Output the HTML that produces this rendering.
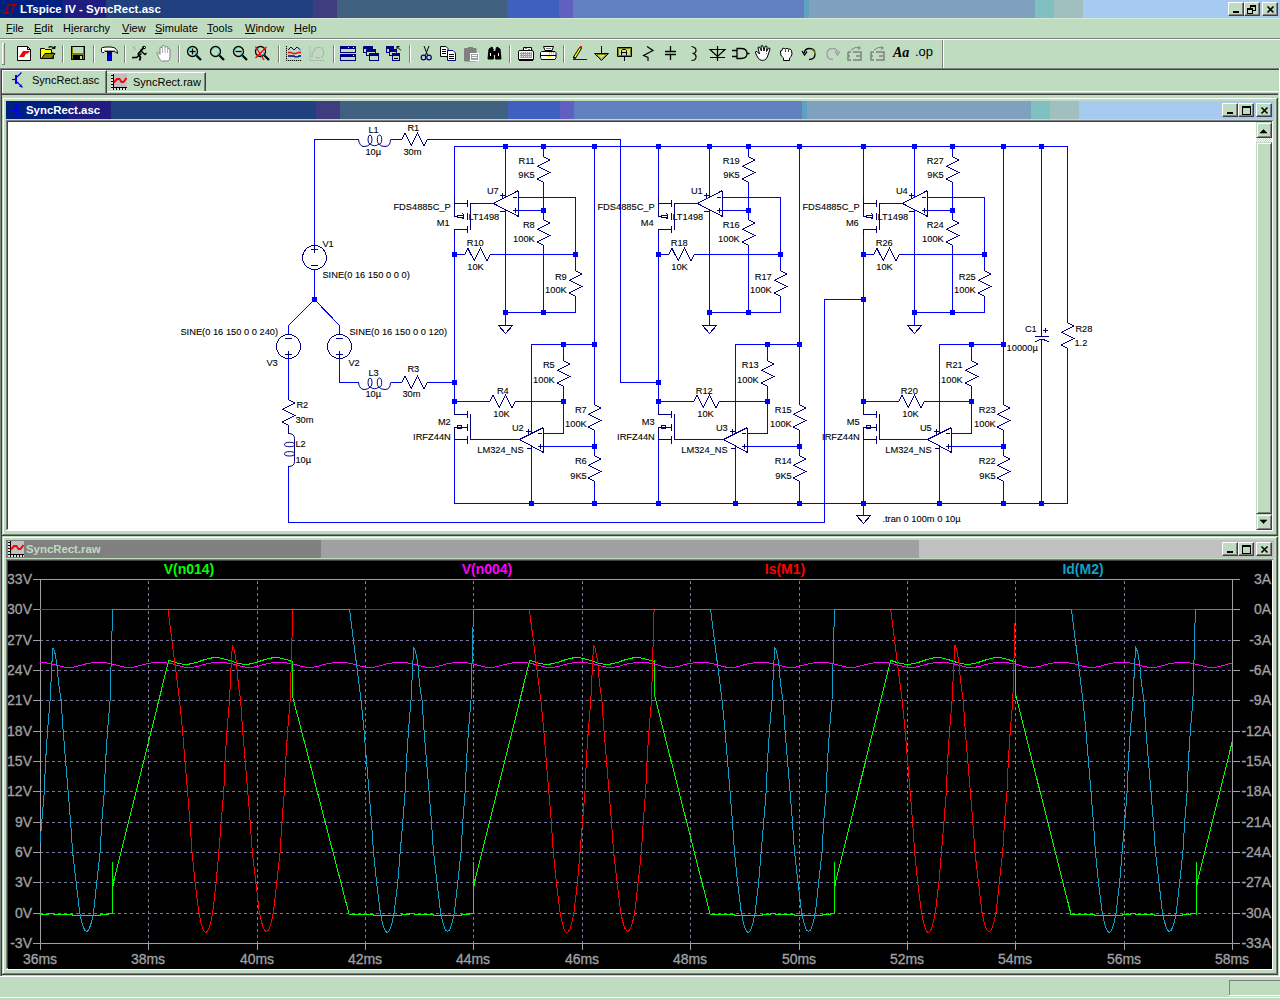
<!DOCTYPE html><html><head><meta charset="utf-8"><style>
*{margin:0;padding:0;box-sizing:border-box}
html,body{width:1280px;height:1000px;overflow:hidden;background:#c0dcc0;font-family:"Liberation Sans",sans-serif;position:relative}
.a{position:absolute}
.seg{position:absolute;top:0;height:100%}
.cb{position:absolute;width:16px;height:14px;background:#c0dcc0;border-top:1px solid #fff;border-left:1px solid #fff;border-right:1px solid #404040;border-bottom:1px solid #404040;box-shadow:inset -1px -1px 0 #808080}
.menu{position:absolute;top:21px;font-size:11px;line-height:14px;color:#000;white-space:nowrap}
svg{position:absolute;overflow:visible}
.ttl{position:absolute;font-weight:bold;white-space:nowrap}
</style></head><body>
<div class="a" style="left:0;top:0;width:1280px;height:18px;overflow:hidden"><div class="seg" style="left:0px;width:63px;background:#002080"></div><div class="seg" style="left:63px;width:43px;background:#201c80"></div><div class="seg" style="left:106px;width:207px;background:#204080"></div><div class="seg" style="left:313px;width:24px;background:#403c80"></div><div class="seg" style="left:337px;width:170px;background:#406080"></div><div class="seg" style="left:507px;width:52px;background:#4060c0"></div><div class="seg" style="left:559px;width:14px;background:#6060c0"></div><div class="seg" style="left:573px;width:231px;background:#6080c0"></div><div class="seg" style="left:804px;width:5px;background:#60a0c0"></div><div class="seg" style="left:809px;width:226px;background:#80a0c0"></div><div class="seg" style="left:1035px;width:19px;background:#80c0c0"></div><div class="seg" style="left:1054px;width:29px;background:#a0c0c0"></div><div class="seg" style="left:1083px;width:197px;background:#a6caf0"></div></div>
<svg width="18" height="18" style="left:0;top:0"><path d="M7.5 4 H9 L6.8 12 H9.5 L8.8 14 H2 L3 12.5 H5 Z M10 4 H17 L16.3 5.5 H15.2 L12 13.5 H10.8 L13.8 5.5 H10.2 Z" fill="#a00000"/></svg>
<div class="ttl" style="left:20px;top:2px;font-size:11.5px;line-height:14px;color:#fff">LTspice IV - SyncRect.asc</div>
<div class="cb" style="left:1228px;top:2px"><div class="a" style="left:4px;top:8px;width:6px;height:2px;background:#000"></div></div><div class="cb" style="left:1244px;top:2px"><div class="a" style="left:5px;top:2px;width:6px;height:6px;border:1px solid #000;border-top-width:2px"></div><div class="a" style="left:2px;top:5px;width:6px;height:6px;border:1px solid #000;border-top-width:2px;background:#c0dcc0"></div></div><div class="cb" style="left:1262px;top:2px"><svg width="16" height="14" style="left:0;top:0"><path d="M4.5 3.5 L10.5 9.5 M10.5 3.5 L4.5 9.5" stroke="#000" stroke-width="1.6"/></svg></div>
<div class="a" style="left:0px;top:18px;width:1280px;height:1px;background:#d4ead4"></div>
<div class="menu" style="left:6px"><u>F</u>ile</div>
<div class="menu" style="left:34px"><u>E</u>dit</div>
<div class="menu" style="left:63px">H<u>i</u>erarchy</div>
<div class="menu" style="left:122px"><u>V</u>iew</div>
<div class="menu" style="left:155px"><u>S</u>imulate</div>
<div class="menu" style="left:207px"><u>T</u>ools</div>
<div class="menu" style="left:245px"><u>W</u>indow</div>
<div class="menu" style="left:294px"><u>H</u>elp</div>
<div class="a" style="left:0px;top:38px;width:1280px;height:1px;background:#808080"></div><div class="a" style="left:0px;top:39px;width:1280px;height:1px;background:#fff"></div>
<svg width="1280" height="70" style="left:0;top:0">
<rect x="2" y="43" width="1" height="22" fill="#fff"/>
<rect x="2" y="43" width="2" height="1" fill="#fff"/>
<rect x="4" y="43" width="1" height="22" fill="#808080"/>
<rect x="2" y="64" width="3" height="1" fill="#808080"/>
<path d="M17.5 46.5 H27.5 L30.5 49.5 V60.5 H17.5 Z" stroke="#000" fill="#fff" stroke-width="1" />
<path d="M27.5 46.5 V49.5 H30.5" stroke="#000" fill="none" stroke-width="1" />
<path d="M19 57 L23 51 L30 51 L28 53.5 L26 53.5 L24 57 Z M22 54 h3" stroke="none" fill="#ff0000" stroke-width="1" />
<path d="M40.5 48.5 H44.5 L45.5 49.5 H51.5 V53 H53.5 V58.5 H40.5 Z" stroke="#000" fill="#ffff00" stroke-width="1" />
<path d="M41.5 58.5 L45 53.5 H55 L51.5 58.5 Z" stroke="#000" fill="#808000" stroke-width="1" />
<path d="M48.5 47.5 Q51 45.5 54 48" stroke="#000" fill="none" stroke-width="1.2" />
<path d="M52.5 48.5 h2.5 v-2.5 z" stroke="#000" fill="#000" stroke-width="1" />
<rect x="62" y="45" width="1" height="18" fill="#808080"/>
<rect x="63" y="45" width="1" height="18" fill="#fff"/>
<rect x="71" y="46" width="14" height="14" fill="#000"/>
<rect x="72" y="47" width="12" height="12" fill="#808000"/>
<rect x="73" y="47" width="10" height="6" fill="#c0dcc0"/>
<rect x="73" y="55" width="10" height="4" fill="#000"/>
<rect x="80" y="56" width="2" height="3" fill="#c0dcc0"/>
<rect x="93" y="45" width="1" height="18" fill="#808080"/>
<rect x="94" y="45" width="1" height="18" fill="#fff"/>
<path d="M101.5 48.5 Q101.5 47.5 102.5 47.5 H104 L105 47 H111 Q115.5 47 117 50.5 L117.5 53.5 L115.5 52 Q114 51.5 112 51.5 H105 L104 52.5 H102.5 Q101.5 52.5 101.5 51.5 Z" stroke="#000" fill="#fff" stroke-width="1" />
<rect x="104" y="50" width="11" height="1" fill="#a0a0a4"/>
<rect x="107" y="52" width="5" height="4" fill="#000080"/>
<rect x="107" y="56" width="5" height="5" fill="#0000ff"/>
<path d="M107.5 52 V60.5 H111.5 V52" stroke="#000080" fill="none" stroke-width="1" />
<rect x="124" y="45" width="1" height="18" fill="#808080"/>
<rect x="125" y="45" width="1" height="18" fill="#fff"/>
<path d="M141.5 53.5 L136.5 57.5 H133 V58.5" stroke="#000" fill="none" stroke-width="1.6" />
<path d="M143.5 48 L139 53 Q137.5 54.5 139.5 56 L140.5 57.5 L139.5 60.5" stroke="#000" fill="none" stroke-width="1.8" />
<path d="M141 51 L145 54.5 L146.5 53" stroke="#000" fill="none" stroke-width="1.3" />
<path d="M140.5 50.5 L142 49" stroke="#000" fill="none" stroke-width="1.3" />
<circle cx="144" cy="47.5" r="1.8" fill="#000"/><rect x="144" y="47" width="1" height="1" fill="#fff"/>
<path d="M132.5 48 L135.5 46.5 M133 50 L136 48.5" stroke="#a0a0a4" fill="none" stroke-width="0.9" />
<path d="M157 53.5 Q156 52.5 157.5 52 L160 54.5 V48 Q160 47 161 47 Q162 47 162 48 V46.5 Q162 45.5 163.5 45.5 Q165 45.5 165 46.5 V47.5 Q165.5 46.5 166.5 46.5 Q168 46.5 168 48 V49 Q168.5 48 169 48.5 Q170 49 170 50 V57 Q170 60 168 61 H161.5 Q160 60 159 58 Z" stroke="#808080" fill="#fff" stroke-width="1" />
<path d="M162.5 48 V53 M165 47.5 V53 M167.5 48.5 V53" stroke="#a0a0a4" fill="none" stroke-width="0.8" />
<rect x="178" y="45" width="1" height="18" fill="#808080"/>
<rect x="179" y="45" width="1" height="18" fill="#fff"/>
<path d="M196.5 55.5 L201.0 60" stroke="#000" fill="none" stroke-width="2.2" />
<circle cx="192.5" cy="51.5" r="5" fill="none" stroke="#000" stroke-width="1.3"/>
<path d="M189.3 50 A3.6 3.6 0 0 1 191.5 47.8" stroke="#00e0ff" fill="none" stroke-width="1" />
<path d="M195.8 52 A3.6 3.6 0 0 1 194.0 54.8" stroke="#00e0ff" fill="none" stroke-width="1" />
<path d="M189.5 51.5 H195.5" stroke="#000" fill="none" stroke-width="1.3" />
<path d="M192.5 48.5 V54.5" stroke="#000" fill="none" stroke-width="1.3" />
<path d="M219.5 55.5 L224.0 60" stroke="#000" fill="none" stroke-width="2.2" />
<circle cx="215.5" cy="51.5" r="5" fill="none" stroke="#000" stroke-width="1.3"/>
<path d="M212.3 50 A3.6 3.6 0 0 1 214.5 47.8" stroke="#00e0ff" fill="none" stroke-width="1" />
<path d="M218.8 52 A3.6 3.6 0 0 1 217.0 54.8" stroke="#00e0ff" fill="none" stroke-width="1" />
<path d="M242.5 55.5 L247.0 60" stroke="#000" fill="none" stroke-width="2.2" />
<circle cx="238.5" cy="51.5" r="5" fill="none" stroke="#000" stroke-width="1.3"/>
<path d="M235.3 50 A3.6 3.6 0 0 1 237.5 47.8" stroke="#00e0ff" fill="none" stroke-width="1" />
<path d="M241.8 52 A3.6 3.6 0 0 1 240.0 54.8" stroke="#00e0ff" fill="none" stroke-width="1" />
<path d="M235.5 51.5 H241.5" stroke="#000" fill="none" stroke-width="1.3" />
<path d="M264.5 55.5 L269.0 60" stroke="#000" fill="none" stroke-width="2.2" />
<circle cx="260.5" cy="51.5" r="5" fill="none" stroke="#000" stroke-width="1.3"/>
<path d="M257.3 50 A3.6 3.6 0 0 1 259.5 47.8" stroke="#00e0ff" fill="none" stroke-width="1" />
<path d="M263.8 52 A3.6 3.6 0 0 1 262.0 54.8" stroke="#00e0ff" fill="none" stroke-width="1" />
<path d="M255.5 46.5 L264 60 M266.5 47 L255.5 58" stroke="#ff0000" fill="none" stroke-width="1.4" />
<rect x="278" y="45" width="1" height="18" fill="#808080"/>
<rect x="279" y="45" width="1" height="18" fill="#fff"/>
<path d="M286.5 46 V60.5 H302" stroke="#000" fill="none" stroke-width="1" stroke-dasharray="1.2 0.8"/>
<path d="M288 50 L291 47 L294 50 L297 47 L300.5 50" stroke="#000080" fill="none" stroke-width="1" />
<path d="M288 52.5 H291 L293 53.5 H296 L298 52.5 H301" stroke="#ff0000" fill="none" stroke-width="1.3" />
<path d="M288 56 H294 L295 56.8 H298 L299 56 H301" stroke="#000080" fill="none" stroke-width="1.3" />
<path d="M310 46.5 V60.5 H325" stroke="#a0a0a4" fill="none" stroke-width="1" stroke-dasharray="1.2 1"/>
<path d="M312 57 Q312 51 317 47.5 Q322 47 322.5 49 Q325 53 322 57 Q319 59 316 57" stroke="#a0a0a4" fill="none" stroke-width="1.2" stroke-dasharray="1.5 1"/>
<rect x="333" y="45" width="1" height="18" fill="#808080"/>
<rect x="334" y="45" width="1" height="18" fill="#fff"/>
<rect x="340" y="46" width="16" height="7" fill="#000080"/>
<rect x="341" y="49" width="14" height="3" fill="#c0dcc0"/>
<rect x="340" y="54" width="16" height="7" fill="#000080"/>
<rect x="341" y="57" width="14" height="3" fill="#c0dcc0"/>
<rect x="348" y="47" width="1" height="1" fill="#fff"/>
<rect x="353" y="47" width="1" height="1" fill="#fff"/>
<rect x="353" y="55" width="1" height="1" fill="#fff"/>
<rect x="363" y="46" width="10" height="7" fill="#000080"/>
<rect x="364" y="49" width="8" height="3" fill="#c0dcc0"/>
<rect x="366" y="49" width="10" height="7" fill="#000080"/>
<rect x="367" y="52" width="8" height="3" fill="#c0dcc0"/>
<rect x="369" y="53" width="10" height="8" fill="#000080"/>
<rect x="370" y="56" width="8" height="4" fill="#c0dcc0"/>
<rect x="363" y="46" width="1" height="1" fill="#ff0000"/>
<rect x="366" y="49" width="1" height="1" fill="#ff0000"/>
<rect x="386" y="46" width="8" height="7" fill="#000080"/>
<rect x="387" y="49" width="6" height="3" fill="#c0dcc0"/>
<rect x="389" y="49" width="8" height="7" fill="#000080"/>
<rect x="390" y="52" width="6" height="3" fill="#c0dcc0"/>
<rect x="392" y="53" width="8" height="8" fill="#000080"/>
<rect x="393" y="56" width="6" height="4" fill="#c0dcc0"/>
<rect x="394" y="58" width="4" height="1" fill="#000"/>
<path d="M397 46.5 L401 50.5 M397 46.5 h2.5 M397 46.5 v2.5" stroke="#000" fill="none" stroke-width="1" />
<rect x="409" y="45" width="1" height="18" fill="#808080"/>
<rect x="410" y="45" width="1" height="18" fill="#fff"/>
<path d="M424 46 L427.5 55 M429 46 L425.5 55" stroke="#000" fill="none" stroke-width="1" />
<circle cx="423.5" cy="57.5" r="2.3" fill="none" stroke="#000080" stroke-width="1.2"/><circle cx="429" cy="57.5" r="2.3" fill="none" stroke="#000080" stroke-width="1.2"/>
<path d="M440.5 46.5 H446 L448 48.5 V56.5 H440.5 Z" stroke="#000" fill="#fff" stroke-width="1" />
<rect x="442" y="49" width="4" height="1" fill="#000"/>
<rect x="442" y="51" width="4" height="1" fill="#000"/>
<rect x="442" y="53" width="4" height="1" fill="#000"/>
<path d="M447.5 50.5 H453 L455.5 53 V60.5 H447.5 Z" stroke="#000080" fill="#fff" stroke-width="1" />
<rect x="449" y="54" width="5" height="1" fill="#000"/>
<rect x="449" y="56" width="5" height="1" fill="#000"/>
<rect x="449" y="58" width="5" height="1" fill="#000"/>
<path d="M464.5 48.5 H476 V61 H464.5 Z" stroke="#808080" fill="#808080" stroke-width="1" />
<rect x="468" y="47" width="5" height="2" fill="#808080"/>
<rect x="470" y="53" width="9" height="8" fill="#fff"/>
<rect x="471" y="54" width="7" height="6" fill="#a0a0a4"/>
<rect x="472" y="55" width="5" height="1" fill="#fff"/>
<rect x="472" y="57" width="5" height="1" fill="#fff"/>
<path d="M488 59 L489 49 L492 47 L493 49 L493.5 59 Z M495.5 59 L496 49 L497 47 L500 49 L501 59 Z" stroke="#000" fill="#000" stroke-width="1" />
<rect x="492" y="51" width="5" height="4" fill="#000"/>
<rect x="490" y="53" width="1" height="3" fill="#fff"/>
<rect x="498" y="53" width="1" height="3" fill="#fff"/>
<rect x="509" y="45" width="1" height="18" fill="#808080"/>
<rect x="510" y="45" width="1" height="18" fill="#fff"/>
<path d="M523.5 47.5 H531.5 V50.5 H523.5 Z" stroke="#000" fill="#fff" stroke-width="1" />
<rect x="525" y="48" width="2" height="1" fill="#808080"/>
<rect x="528" y="49" width="2" height="1" fill="#808080"/>
<path d="M518.5 51.5 Q518.5 50.5 520 50.5 H532 Q533.5 50.5 533.5 52 V59.5 H518.5 Z" stroke="#000" fill="#fff" stroke-width="1" />
<rect x="520" y="52" width="12" height="6" fill="#a0a0a4"/>
<path d="M520 52.5 h12 M520 54.5 h12 M520 56.5 h12" stroke="#fff" fill="none" stroke-width="0.7" stroke-dasharray="1 1"/>
<rect x="519" y="60" width="14" height="1" fill="#000"/>
<path d="M543.5 46.5 H553.5 L552 50.5 H545 Z" stroke="#000" fill="#fff" stroke-width="1" />
<rect x="546" y="48" width="5" height="1" fill="#808080"/>
<path d="M541.5 51.5 Q540 52 540.5 55 Q540 58 541.5 59.5 H555 Q556.5 58 556 55 Q556.5 52 555 51.5 Z" stroke="#000" fill="#fff" stroke-width="1" />
<rect x="541" y="55" width="15" height="1" fill="#000"/>
<rect x="547" y="56" width="4" height="1" fill="#ffff00"/>
<path d="M549 52.5 h5 M549 54 h5" stroke="#808080" fill="none" stroke-width="0.7" stroke-dasharray="1 1"/>
<rect x="563" y="45" width="1" height="18" fill="#808080"/>
<rect x="564" y="45" width="1" height="18" fill="#fff"/>
<path d="M573.5 57 L579.5 47.5 L581.5 48.5 L575.5 58 Z" stroke="#000" fill="#ffff00" stroke-width="1" />
<path d="M574 58.5 L575.5 58 L573.5 57 Z" stroke="#000" fill="#000" stroke-width="1" />
<rect x="580" y="46" width="2" height="2" fill="#ff0000"/>
<rect x="573" y="59" width="14" height="1" fill="#0000ff"/>
<path d="M601.5 46 V53" stroke="#000" fill="none" stroke-width="1" />
<path d="M594.5 53.5 H608.5 L601.5 60.5 Z" stroke="#000" fill="#c0dcc0" stroke-width="1" />
<path d="M596.5 54.5 H606.5 L601.5 59 Z" stroke="#808000" fill="none" stroke-width="1" />
<path d="M617.5 47.5 H631.5 V56.5 H617.5 Z" stroke="#000" fill="#c0dcc0" stroke-width="1" />
<path d="M618.5 48.5 H630.5 V55.5 H618.5 Z" stroke="#808000" fill="none" stroke-width="1" />
<path d="M621.5 55.5 V50.5 L622.5 49.5 H625.5 L626.5 50.5 V55.5 M622 52.5 h4" stroke="#000" fill="none" stroke-width="1" />
<rect x="624" y="57" width="1" height="4" fill="#000"/>
<path d="M647 46.5 L653 50.5 L643.5 55.5 L648 57.5 V61" stroke="#000" fill="none" stroke-width="1.2" />
<path d="M670.5 46 V51.5 M670.5 54.5 V60 M665 51.5 H676 M665 54.5 H676" stroke="#000" fill="none" stroke-width="1.3" />
<path d="M691.5 46.5 Q696.5 47.5 696 51 Q695.5 53.5 692.5 53.5 Q696.5 54 696 57.5 Q695.5 60.5 691.5 60.5" stroke="#000" fill="none" stroke-width="1.2" />
<path d="M717.5 46 V61 M710 49.5 H725 L717.5 56.5 Z M710 57.5 H725" stroke="#000" fill="none" stroke-width="1.2" />
<path d="M737 48.5 H741 Q747 48.5 747 53.5 Q747 58.5 741 58.5 H737 Z" stroke="#000" fill="#c0dcc0" stroke-width="1.3" />
<path d="M732 50.5 H737 M732 56.5 H737 M747 53.5 H749.5" stroke="#000" fill="none" stroke-width="1.3" />
<path d="M755.5 53 Q755 51 757 51.5 L759.5 54 L758 48 Q758 46.5 759.5 47 L761.5 51 L761 46 Q762 45 763 46 L764 51 L765 46.5 Q766 45.5 767 46.5 L766.5 51.5 L768.5 48 Q770 47.5 770 49 L768 55 Q767 60 762.5 60.5 Q759 60.5 757.5 57 Z" stroke="#000" fill="#fff" stroke-width="1" />
<rect x="766" y="53" width="1" height="1" fill="#00a0c0"/>
<path d="M780.5 53 Q780 50 782 50.5 L782.5 48.5 Q784 47.5 785.5 49 Q787 47.5 788.5 49 Q790.5 48.5 791.5 50.5 L792 54 Q791.5 57 789.5 58 V60.5 H783.5 V58 Q780.5 56.5 780.5 53 Z" stroke="#000" fill="#fff" stroke-width="1" />
<path d="M785.5 49.5 V52 M788.5 49.5 V52" stroke="#000" fill="none" stroke-width="0.8" />
<path d="M804 53 Q805 48.5 809.5 48.5 Q815 48.5 815 54 Q815 59.5 809 59.5" stroke="#000" fill="none" stroke-width="1.3" />
<path d="M802 51 L804.5 55 L807 51.5" stroke="#000" fill="none" stroke-width="1.3" />
<path d="M812 49.5 Q815 51 815 54" stroke="#808000" fill="none" stroke-width="1.3" />
<path d="M838 53 Q837 48.5 832.5 48.5 Q827 48.5 827 54 Q827 59.5 833 59.5" stroke="#a0a0a4" fill="none" stroke-width="1.3" />
<path d="M840 51 L837.5 55 L835 51.5" stroke="#a0a0a4" fill="none" stroke-width="1.3" />
<path d="M848 52 H851 M848 52 V60 H851 M848 56 H850" stroke="#808080" fill="none" stroke-width="1.5" />
<path d="M853 52 H861 V60 H853 M856 56 H860" stroke="#808080" fill="none" stroke-width="1.5" />
<path d="M851 50 Q855 46 860 48 M858 46.5 L860.5 48 L858 49.5" stroke="#808080" fill="none" stroke-width="1" />
<path d="M871 52 H874 M871 52 V60 H874 M871 56 H873" stroke="#808080" fill="none" stroke-width="1.5" />
<path d="M876 52 H884 V60 H876 M879 56 H883" stroke="#808080" fill="none" stroke-width="1.5" />
<path d="M874 50 Q878 46 883 48 M881 46.5 L883.5 48 L881 49.5" stroke="#808080" fill="none" stroke-width="1" />
</svg>
<div class="a" style="left:893px;top:45px;font-family:'Liberation Serif';font-style:italic;font-weight:bold;font-size:14px;line-height:16px;color:#000">Aa</div>
<div class="a" style="left:915px;top:44px;font-family:'Liberation Sans';font-size:13px;line-height:16px;color:#000">.op</div>
<svg width="1280" height="70" style="left:0;top:0"><rect x="942" y="40" width="1" height="28" fill="#808080"/><rect x="943" y="40" width="1" height="28" fill="#fff"/></svg>
<div class="a" style="left:0px;top:68px;width:1280px;height:1px;background:#808080"></div><div class="a" style="left:1px;top:69px;width:1279px;height:1px;background:#404040"></div><div class="a" style="left:0px;top:68px;width:1px;height:909px;background:#808080"></div><div class="a" style="left:1px;top:69px;width:1px;height:907px;background:#404040"></div>
<div class="a" style="left:1279px;top:68px;width:1px;height:909px;background:#fff"></div>
<div class="a" style="left:107px;top:91px;width:1171px;height:1px;background:#fff"></div><div class="a" style="left:2px;top:93px;width:1276px;height:1px;background:#808080"></div><div class="a" style="left:2px;top:94px;width:1276px;height:1px;background:#404040"></div>
<div class="a" style="left:2px;top:70px;width:105px;height:23px;background:#c0dcc0;border-top:1px solid #fff;border-left:1px solid #fff;border-right:1px solid #404040;box-shadow:inset -1px 0 0 #808080"></div>
<svg width="30" height="24" style="left:0;top:68px"><path d="M12 11.5 H15.5" stroke="#0000ff" stroke-width="1.2"/><rect x="15" y="7" width="2" height="9" fill="#0000ff"/><path d="M17 9 L21.5 4.5 M17 14 L22.5 19.5" stroke="#0000ff" stroke-width="1.2"/><path d="M19 18.5 L21.5 16 L21.5 19 Z" fill="#0000ff"/></svg>
<div class="a" style="left:32px;top:74px;font-size:11px;line-height:13px;color:#000;white-space:nowrap">SyncRect.asc</div>
<div class="a" style="left:107px;top:72px;width:99px;height:19px;background:#c0dcc0;border-top:1px solid #fff;border-right:1px solid #404040;box-shadow:inset -1px 0 0 #808080"></div>
<svg width="18" height="17" style="left:111px;top:74px" shape-rendering="crispEdges"><rect x="2" y="0" width="14" height="13" fill="#c0c0c0"/><rect x="0" y="0" width="2" height="16" fill="#e0e0e0"/><rect x="0" y="14" width="16" height="2" fill="#e0e0e0"/><rect x="2" y="0" width="1" height="16" fill="#000"/><rect x="0" y="13" width="16" height="1" fill="#000"/><rect x="0" y="1" width="2" height="1" fill="#000"/><rect x="0" y="4" width="2" height="1" fill="#000"/><rect x="0" y="7" width="2" height="1" fill="#000"/><rect x="0" y="10" width="2" height="1" fill="#000"/><rect x="2" y="14" width="1" height="2" fill="#000"/><rect x="5" y="14" width="1" height="2" fill="#000"/><rect x="8" y="14" width="1" height="2" fill="#000"/><rect x="11" y="14" width="1" height="2" fill="#000"/><rect x="14" y="14" width="1" height="2" fill="#000"/></svg><svg width="18" height="17" style="left:111px;top:74px"><path d="M3 8.5 L6 5 H8.5 L10.5 8 H12.5 L15.5 4" stroke="#ff0000" stroke-width="2" fill="none" stroke-linejoin="round"/></svg>
<div class="a" style="left:133px;top:76px;font-size:11px;line-height:13px;color:#000;white-space:nowrap">SyncRect.raw</div>
<div class="a" style="left:3px;top:98px;width:1273px;height:1px;background:#fff"></div><div class="a" style="left:3px;top:98px;width:1px;height:436px;background:#fff"></div><div class="a" style="left:1276px;top:99px;width:1px;height:436px;background:#808080"></div><div class="a" style="left:1277px;top:98px;width:1px;height:438px;background:#404040"></div><div class="a" style="left:3px;top:534px;width:1274px;height:1px;background:#808080"></div><div class="a" style="left:2px;top:535px;width:1276px;height:1px;background:#404040"></div><div class="a" style="left:6px;top:101px;width:1268px;height:18px;overflow:hidden"><div class="seg" style="left:0px;width:62px;background:#002080"></div><div class="seg" style="left:62px;width:43px;background:#201c80"></div><div class="seg" style="left:105px;width:205px;background:#204080"></div><div class="seg" style="left:310px;width:24px;background:#403c80"></div><div class="seg" style="left:334px;width:168px;background:#406080"></div><div class="seg" style="left:502px;width:52px;background:#4060c0"></div><div class="seg" style="left:554px;width:14px;background:#6060c0"></div><div class="seg" style="left:568px;width:228px;background:#6080c0"></div><div class="seg" style="left:796px;width:5px;background:#60a0c0"></div><div class="seg" style="left:801px;width:224px;background:#80a0c0"></div><div class="seg" style="left:1025px;width:19px;background:#80c0c0"></div><div class="seg" style="left:1044px;width:29px;background:#a0c0c0"></div><div class="seg" style="left:1073px;width:195px;background:#a6caf0"></div></div><svg width="20" height="18" style="left:7px;top:101px"><path d="M4.5 9.5 H8.5 M8.5 4 V14 M8.5 7 L13 2.5 M8.5 11 L14 16" stroke="#0000ff" stroke-width="1.2" fill="none"/><path d="M8 5h2v8h-2z M11 13.5 l2.5 -1 l0 2.5z" fill="#0000ff"/></svg><div class="ttl" style="left:26px;top:103px;font-size:11.4px;line-height:14px;color:#fff">SyncRect.asc</div><div class="cb" style="left:1222px;top:103px"><div class="a" style="left:4px;top:8px;width:6px;height:2px;background:#000"></div></div><div class="cb" style="left:1238px;top:103px"><div class="a" style="left:3px;top:2px;width:9px;height:9px;border:1px solid #000;border-top-width:2px"></div></div><div class="cb" style="left:1256px;top:103px"><svg width="16" height="14" style="left:0;top:0"><path d="M4.5 3.5 L10.5 9.5 M10.5 3.5 L4.5 9.5" stroke="#000" stroke-width="1.6"/></svg></div><div class="a" style="left:6px;top:120px;width:1267px;height:1px;background:#808080"></div><div class="a" style="left:6px;top:120px;width:1px;height:410px;background:#808080"></div><div class="a" style="left:7px;top:121px;width:1265px;height:1px;background:#404040"></div><div class="a" style="left:7px;top:121px;width:1px;height:408px;background:#404040"></div><div class="a" style="left:1272px;top:121px;width:1px;height:410px;background:#fff"></div><div class="a" style="left:6px;top:530px;width:1267px;height:1px;background:#fff"></div>
<div class="a" style="left:3px;top:537px;width:1273px;height:1px;background:#fff"></div><div class="a" style="left:3px;top:537px;width:1px;height:436px;background:#fff"></div><div class="a" style="left:1276px;top:538px;width:1px;height:436px;background:#808080"></div><div class="a" style="left:1277px;top:537px;width:1px;height:438px;background:#404040"></div><div class="a" style="left:3px;top:973px;width:1274px;height:1px;background:#808080"></div><div class="a" style="left:2px;top:974px;width:1276px;height:1px;background:#404040"></div><div class="a" style="left:6px;top:540px;width:1268px;height:18px;overflow:hidden"><div class="seg" style="left:0;width:315px;background:#808080"></div><div class="seg" style="left:315px;width:598px;background:#a0a0a4"></div><div class="seg" style="left:913px;width:355px;background:#c0c0c0"></div></div><svg width="18" height="17" style="left:8px;top:541px" shape-rendering="crispEdges"><rect x="2" y="0" width="14" height="13" fill="#c0c0c0"/><rect x="0" y="0" width="2" height="16" fill="#e0e0e0"/><rect x="0" y="14" width="16" height="2" fill="#e0e0e0"/><rect x="2" y="0" width="1" height="16" fill="#000"/><rect x="0" y="13" width="16" height="1" fill="#000"/><rect x="0" y="1" width="2" height="1" fill="#000"/><rect x="0" y="4" width="2" height="1" fill="#000"/><rect x="0" y="7" width="2" height="1" fill="#000"/><rect x="0" y="10" width="2" height="1" fill="#000"/><rect x="2" y="14" width="1" height="2" fill="#000"/><rect x="5" y="14" width="1" height="2" fill="#000"/><rect x="8" y="14" width="1" height="2" fill="#000"/><rect x="11" y="14" width="1" height="2" fill="#000"/><rect x="14" y="14" width="1" height="2" fill="#000"/></svg><svg width="18" height="17" style="left:8px;top:541px"><path d="M3 8.5 L6 5 H8.5 L10.5 8 H12.5 L15.5 4" stroke="#ff0000" stroke-width="2" fill="none" stroke-linejoin="round"/></svg><div class="ttl" style="left:26px;top:542px;font-size:11.4px;line-height:14px;color:#c0dcc0">SyncRect.raw</div><div class="cb" style="left:1222px;top:542px"><div class="a" style="left:4px;top:8px;width:6px;height:2px;background:#000"></div></div><div class="cb" style="left:1238px;top:542px"><div class="a" style="left:3px;top:2px;width:9px;height:9px;border:1px solid #000;border-top-width:2px"></div></div><div class="cb" style="left:1256px;top:542px"><svg width="16" height="14" style="left:0;top:0"><path d="M4.5 3.5 L10.5 9.5 M10.5 3.5 L4.5 9.5" stroke="#000" stroke-width="1.6"/></svg></div><div class="a" style="left:6px;top:559px;width:1267px;height:1px;background:#808080"></div><div class="a" style="left:6px;top:559px;width:1px;height:410px;background:#808080"></div><div class="a" style="left:7px;top:560px;width:1265px;height:1px;background:#404040"></div><div class="a" style="left:7px;top:560px;width:1px;height:408px;background:#404040"></div><div class="a" style="left:1272px;top:560px;width:1px;height:410px;background:#fff"></div><div class="a" style="left:6px;top:969px;width:1267px;height:1px;background:#fff"></div>
<div class="a" style="left:8px;top:122px;width:1248px;height:408px;background:#fff;overflow:hidden"><svg width="1280" height="1000" style="left:-8px;top:-122px" shape-rendering="crispEdges"><rect x="314" y="139" width="45" height="1" fill="#0000ff"/>
<path d="M358.5 139.5 Q359.5 146.5 364.0 146.5 Q368.5 146.5 370.0 144.0 Q374.5 147.5 379.0 144.0 Q380.5 146.5 385.0 146.5 Q390.5 146.5 390.5 139.5" fill="none" stroke="#000080" stroke-width="1" shape-rendering="auto"/>
<ellipse cx="370.0" cy="139.5" rx="2" ry="4.5" fill="none" stroke="#000080" stroke-width="1" shape-rendering="auto"/>
<ellipse cx="379.5" cy="139.5" rx="2.2" ry="4.5" fill="none" stroke="#000080" stroke-width="1" shape-rendering="auto"/>
<rect x="391" y="139" width="8" height="1" fill="#0000ff"/>
<polyline points="398.50,139.50 401.69,139.50 404.88,133.12 411.25,145.88 417.62,133.12 424.00,145.88 427.19,139.50 430.38,139.50" fill="none" stroke="#000080" stroke-width="1"/>
<rect x="430" y="139" width="191" height="1" fill="#0000ff"/>
<rect x="620" y="139" width="1" height="244" fill="#0000ff"/>
<rect x="620" y="382" width="39" height="1" fill="#0000ff"/>
<rect x="314" y="139" width="1" height="107" fill="#0000ff"/>
<circle cx="314.5" cy="257.5" r="12" fill="none" stroke="#000080" stroke-width="1"/>
<rect x="311" y="249" width="7" height="1" fill="#000080"/>
<rect x="314" y="246" width="1" height="7" fill="#000080"/>
<rect x="311" y="265" width="7" height="1" fill="#000080"/>
<rect x="314" y="269" width="1" height="31" fill="#0000ff"/>
<rect x="312" y="297" width="5" height="5" fill="#0000ff"/>
<line x1="314.5" y1="299.5" x2="288.5" y2="325.5" stroke="#0000ff" stroke-width="1"/>
<rect x="288" y="325" width="1" height="10" fill="#0000ff"/>
<line x1="314.5" y1="299.5" x2="339.5" y2="325.5" stroke="#0000ff" stroke-width="1"/>
<rect x="339" y="325" width="1" height="10" fill="#0000ff"/>
<circle cx="288.5" cy="346.5" r="12" fill="none" stroke="#000080" stroke-width="1"/>
<rect x="285" y="354" width="7" height="1" fill="#000080"/>
<rect x="288" y="351" width="1" height="7" fill="#000080"/>
<rect x="285" y="338" width="7" height="1" fill="#000080"/>
<circle cx="339.5" cy="346.5" r="12" fill="none" stroke="#000080" stroke-width="1"/>
<rect x="336" y="354" width="7" height="1" fill="#000080"/>
<rect x="339" y="351" width="1" height="7" fill="#000080"/>
<rect x="336" y="338" width="7" height="1" fill="#000080"/>
<rect x="288" y="358" width="1" height="39" fill="#0000ff"/>
<polyline points="288.50,396.50 288.50,399.69 294.88,402.88 282.12,409.25 294.88,415.62 282.12,422.00 288.50,425.19 288.50,428.38" fill="none" stroke="#000080" stroke-width="1"/>
<rect x="288" y="428" width="1" height="6" fill="#000080"/>
<path d="M288.5 433.5 Q294.5 433.5 294.5 438.5 L294.5 461.5 Q294.5 466.5 288.5 466.5" fill="none" stroke="#000080" stroke-width="1" shape-rendering="auto"/>
<ellipse cx="289.5" cy="444.5" rx="5" ry="2.2" fill="none" stroke="#000080" stroke-width="1" shape-rendering="auto"/>
<ellipse cx="289.5" cy="453.8" rx="5" ry="2.2" fill="none" stroke="#000080" stroke-width="1" shape-rendering="auto"/>
<rect x="288" y="466" width="1" height="57" fill="#0000ff"/>
<rect x="288" y="522" width="537" height="1" fill="#0000ff"/>
<rect x="824" y="299" width="1" height="224" fill="#0000ff"/>
<rect x="824" y="299" width="40" height="1" fill="#0000ff"/>
<rect x="861" y="297" width="5" height="5" fill="#0000ff"/>
<rect x="339" y="358" width="1" height="25" fill="#0000ff"/>
<rect x="339" y="382" width="20" height="1" fill="#0000ff"/>
<path d="M358.5 382.5 Q359.5 389.5 364.0 389.5 Q368.5 389.5 370.0 387.0 Q374.5 390.5 379.0 387.0 Q380.5 389.5 385.0 389.5 Q390.5 389.5 390.5 382.5" fill="none" stroke="#000080" stroke-width="1" shape-rendering="auto"/>
<ellipse cx="370.0" cy="382.5" rx="2" ry="4.5" fill="none" stroke="#000080" stroke-width="1" shape-rendering="auto"/>
<ellipse cx="379.5" cy="382.5" rx="2.2" ry="4.5" fill="none" stroke="#000080" stroke-width="1" shape-rendering="auto"/>
<rect x="391" y="382" width="8" height="1" fill="#0000ff"/>
<polyline points="398.50,382.50 401.69,382.50 404.88,376.12 411.25,388.88 417.62,376.12 424.00,388.88 427.19,382.50 430.38,382.50" fill="none" stroke="#000080" stroke-width="1"/>
<rect x="430" y="382" width="25" height="1" fill="#0000ff"/>
<rect x="452" y="380" width="5" height="5" fill="#0000ff"/>
<rect x="656" y="380" width="5" height="5" fill="#0000ff"/>
<rect x="454" y="146" width="614" height="1" fill="#0000ff"/>
<rect x="454" y="503" width="614" height="1" fill="#0000ff"/>
<rect x="1067" y="146" width="1" height="174" fill="#0000ff"/>
<polyline points="1067.50,319.50 1067.50,322.69 1073.88,325.88 1061.12,332.25 1073.88,338.62 1061.12,345.00 1067.50,348.19 1067.50,351.38" fill="none" stroke="#000080" stroke-width="1"/>
<rect x="1067" y="351" width="1" height="153" fill="#0000ff"/>
<rect x="1041" y="146" width="1" height="181" fill="#0000ff"/>
<rect x="1041" y="326" width="1" height="11" fill="#000080"/>
<rect x="1035" y="336" width="14" height="1" fill="#000080"/>
<path d="M1035.5 342 Q1041.5 337 1048.5 342" fill="none" stroke="#000080"/>
<rect x="1041" y="339" width="1" height="11" fill="#000080"/>
<rect x="1041" y="349" width="1" height="155" fill="#0000ff"/>
<rect x="1043" y="330" width="5" height="1" fill="#000080"/>
<rect x="1045" y="328" width="1" height="5" fill="#000080"/>
<rect x="1001" y="144" width="5" height="5" fill="#0000ff"/>
<rect x="1001" y="501" width="5" height="5" fill="#0000ff"/>
<rect x="1039" y="144" width="5" height="5" fill="#0000ff"/>
<rect x="1039" y="501" width="5" height="5" fill="#0000ff"/>
<rect x="863" y="503" width="1" height="13" fill="#0000ff"/>
<polyline points="856.50,515.50 870.50,515.50 863.50,523.50 856.50,515.50" fill="none" stroke="#000080" stroke-width="1"/>
<rect x="454" y="146" width="1" height="52" fill="#0000ff"/>
<rect x="454" y="233" width="1" height="178" fill="#0000ff"/>
<rect x="454" y="439" width="1" height="65" fill="#0000ff"/>
<rect x="503" y="144" width="5" height="5" fill="#0000ff"/>
<rect x="541" y="144" width="5" height="5" fill="#0000ff"/>
<rect x="592" y="144" width="5" height="5" fill="#0000ff"/>
<rect x="505" y="146" width="1" height="51" fill="#0000ff"/>
<rect x="505" y="209" width="1" height="117" fill="#0000ff"/>
<rect x="503" y="310" width="5" height="5" fill="#0000ff"/>
<polyline points="498.50,325.50 512.50,325.50 505.50,333.50 498.50,325.50" fill="none" stroke="#000080" stroke-width="1"/>
<rect x="543" y="146" width="1" height="8" fill="#0000ff"/>
<polyline points="543.50,153.50 543.50,156.69 549.88,159.88 537.12,166.25 549.88,172.62 537.12,179.00 543.50,182.19 543.50,185.38" fill="none" stroke="#000080" stroke-width="1"/>
<rect x="543" y="185" width="1" height="32" fill="#0000ff"/>
<polyline points="543.50,216.50 543.50,219.69 549.88,222.88 537.12,229.25 549.88,235.62 537.12,242.00 543.50,245.19 543.50,248.38" fill="none" stroke="#000080" stroke-width="1"/>
<rect x="543" y="248" width="1" height="65" fill="#0000ff"/>
<rect x="541" y="208" width="5" height="5" fill="#0000ff"/>
<rect x="541" y="310" width="5" height="5" fill="#0000ff"/>
<polyline points="518.50,190.50 493.50,203.50 518.50,216.50 518.50,190.50" fill="none" stroke="#000080" stroke-width="1"/>
<rect x="513" y="197" width="4" height="1" fill="#000080"/>
<rect x="513" y="210" width="5" height="1" fill="#000080"/>
<rect x="515" y="208" width="1" height="5" fill="#000080"/>
<rect x="500" y="195" width="5" height="1" fill="#000080"/>
<rect x="502" y="193" width="1" height="5" fill="#000080"/>
<rect x="500" y="211" width="5" height="1" fill="#000080"/>
<rect x="518" y="197" width="58" height="1" fill="#0000ff"/>
<rect x="518" y="210" width="26" height="1" fill="#0000ff"/>
<rect x="473" y="203" width="21" height="1" fill="#0000ff"/>
<rect x="454" y="254" width="8" height="1" fill="#0000ff"/>
<polyline points="461.50,254.50 464.69,254.50 467.88,248.12 474.25,260.88 480.62,248.12 487.00,260.88 490.19,254.50 493.38,254.50" fill="none" stroke="#000080" stroke-width="1"/>
<rect x="493" y="254" width="83" height="1" fill="#0000ff"/>
<rect x="452" y="252" width="5" height="5" fill="#0000ff"/>
<rect x="573" y="252" width="5" height="5" fill="#0000ff"/>
<rect x="575" y="197" width="1" height="71" fill="#0000ff"/>
<polyline points="575.50,267.50 575.50,270.69 581.88,273.88 569.12,280.25 581.88,286.62 569.12,293.00 575.50,296.19 575.50,299.38" fill="none" stroke="#000080" stroke-width="1"/>
<rect x="575" y="299" width="1" height="14" fill="#0000ff"/>
<rect x="505" y="312" width="71" height="1" fill="#0000ff"/>
<rect x="454" y="197" width="1" height="20" fill="#000080"/>
<rect x="454" y="203" width="14" height="1" fill="#000080"/>
<rect x="467" y="200" width="1" height="7" fill="#000080"/>
<rect x="457" y="215" width="6" height="1" fill="#000080"/>
<rect x="457" y="217" width="6" height="1" fill="#000080"/>
<rect x="454" y="216" width="4" height="1" fill="#000080"/>
<path d="M462.5 213.5 Q465.5 216.5 462.5 219" fill="none" stroke="#000080"/>
<rect x="467" y="213" width="1" height="7" fill="#000080"/>
<rect x="470" y="203" width="1" height="27" fill="#000080"/>
<rect x="470" y="203" width="4" height="1" fill="#000080"/>
<rect x="467" y="226" width="1" height="7" fill="#000080"/>
<rect x="454" y="229" width="14" height="1" fill="#000080"/>
<rect x="454" y="229" width="1" height="5" fill="#000080"/>
<rect x="531" y="344" width="64" height="1" fill="#0000ff"/>
<rect x="561" y="342" width="5" height="5" fill="#0000ff"/>
<rect x="592" y="342" width="5" height="5" fill="#0000ff"/>
<rect x="594" y="146" width="1" height="256" fill="#0000ff"/>
<polyline points="594.50,401.50 594.50,404.69 600.88,407.88 588.12,414.25 600.88,420.62 588.12,427.00 594.50,430.19 594.50,433.38" fill="none" stroke="#000080" stroke-width="1"/>
<rect x="594" y="433" width="1" height="20" fill="#0000ff"/>
<polyline points="594.50,452.50 594.50,455.69 600.88,458.88 588.12,465.25 600.88,471.62 588.12,478.00 594.50,481.19 594.50,484.38" fill="none" stroke="#000080" stroke-width="1"/>
<rect x="594" y="484" width="1" height="20" fill="#0000ff"/>
<rect x="592" y="444" width="5" height="5" fill="#0000ff"/>
<rect x="592" y="501" width="5" height="5" fill="#0000ff"/>
<rect x="529" y="501" width="5" height="5" fill="#0000ff"/>
<rect x="531" y="344" width="1" height="89" fill="#0000ff"/>
<rect x="531" y="445" width="1" height="59" fill="#0000ff"/>
<rect x="563" y="344" width="1" height="14" fill="#0000ff"/>
<polyline points="563.50,357.50 563.50,360.69 569.88,363.88 557.12,370.25 569.88,376.62 557.12,383.00 563.50,386.19 563.50,389.38" fill="none" stroke="#000080" stroke-width="1"/>
<rect x="563" y="389" width="1" height="45" fill="#0000ff"/>
<rect x="561" y="399" width="5" height="5" fill="#0000ff"/>
<rect x="454" y="401" width="33" height="1" fill="#0000ff"/>
<polyline points="486.50,401.50 489.69,401.50 492.88,395.12 499.25,407.88 505.62,395.12 512.00,407.88 515.19,401.50 518.38,401.50" fill="none" stroke="#000080" stroke-width="1"/>
<rect x="518" y="401" width="46" height="1" fill="#0000ff"/>
<rect x="452" y="399" width="5" height="5" fill="#0000ff"/>
<rect x="543" y="433" width="21" height="1" fill="#0000ff"/>
<rect x="543" y="446" width="52" height="1" fill="#0000ff"/>
<polyline points="543.50,427.50 519.50,439.50 543.50,452.50 543.50,427.50" fill="none" stroke="#000080" stroke-width="1"/>
<rect x="538" y="433" width="4" height="1" fill="#000080"/>
<rect x="538" y="446" width="5" height="1" fill="#000080"/>
<rect x="540" y="444" width="1" height="5" fill="#000080"/>
<rect x="526" y="431" width="5" height="1" fill="#000080"/>
<rect x="528" y="429" width="1" height="5" fill="#000080"/>
<rect x="527" y="448" width="4" height="1" fill="#000080"/>
<rect x="471" y="439" width="49" height="1" fill="#0000ff"/>
<rect x="454" y="410" width="1" height="5" fill="#000080"/>
<rect x="454" y="414" width="14" height="1" fill="#000080"/>
<rect x="467" y="411" width="1" height="7" fill="#000080"/>
<rect x="454" y="427" width="14" height="1" fill="#000080"/>
<rect x="457.5" y="425.5" width="4" height="3" fill="none" stroke="#000080"/>
<rect x="467" y="424" width="1" height="7" fill="#000080"/>
<rect x="470" y="414" width="1" height="26" fill="#000080"/>
<rect x="467" y="436" width="1" height="8" fill="#000080"/>
<rect x="454" y="439" width="14" height="1" fill="#000080"/>
<rect x="454" y="427" width="1" height="13" fill="#000080"/>
<rect x="658" y="146" width="1" height="52" fill="#0000ff"/>
<rect x="658" y="233" width="1" height="178" fill="#0000ff"/>
<rect x="658" y="439" width="1" height="65" fill="#0000ff"/>
<rect x="656" y="144" width="5" height="5" fill="#0000ff"/>
<rect x="656" y="501" width="5" height="5" fill="#0000ff"/>
<rect x="707" y="144" width="5" height="5" fill="#0000ff"/>
<rect x="746" y="144" width="5" height="5" fill="#0000ff"/>
<rect x="797" y="144" width="5" height="5" fill="#0000ff"/>
<rect x="709" y="146" width="1" height="51" fill="#0000ff"/>
<rect x="709" y="209" width="1" height="117" fill="#0000ff"/>
<rect x="707" y="310" width="5" height="5" fill="#0000ff"/>
<polyline points="702.50,325.50 716.50,325.50 709.50,333.50 702.50,325.50" fill="none" stroke="#000080" stroke-width="1"/>
<rect x="748" y="146" width="1" height="8" fill="#0000ff"/>
<polyline points="748.50,153.50 748.50,156.69 754.88,159.88 742.12,166.25 754.88,172.62 742.12,179.00 748.50,182.19 748.50,185.38" fill="none" stroke="#000080" stroke-width="1"/>
<rect x="748" y="185" width="1" height="32" fill="#0000ff"/>
<polyline points="748.50,216.50 748.50,219.69 754.88,222.88 742.12,229.25 754.88,235.62 742.12,242.00 748.50,245.19 748.50,248.38" fill="none" stroke="#000080" stroke-width="1"/>
<rect x="748" y="248" width="1" height="65" fill="#0000ff"/>
<rect x="746" y="208" width="5" height="5" fill="#0000ff"/>
<rect x="746" y="310" width="5" height="5" fill="#0000ff"/>
<polyline points="722.50,190.50 697.50,203.50 722.50,216.50 722.50,190.50" fill="none" stroke="#000080" stroke-width="1"/>
<rect x="717" y="197" width="4" height="1" fill="#000080"/>
<rect x="717" y="210" width="5" height="1" fill="#000080"/>
<rect x="719" y="208" width="1" height="5" fill="#000080"/>
<rect x="704" y="195" width="5" height="1" fill="#000080"/>
<rect x="706" y="193" width="1" height="5" fill="#000080"/>
<rect x="704" y="211" width="5" height="1" fill="#000080"/>
<rect x="722" y="197" width="59" height="1" fill="#0000ff"/>
<rect x="722" y="210" width="27" height="1" fill="#0000ff"/>
<rect x="677" y="203" width="21" height="1" fill="#0000ff"/>
<rect x="658" y="254" width="8" height="1" fill="#0000ff"/>
<polyline points="665.50,254.50 668.69,254.50 671.88,248.12 678.25,260.88 684.62,248.12 691.00,260.88 694.19,254.50 697.38,254.50" fill="none" stroke="#000080" stroke-width="1"/>
<rect x="697" y="254" width="84" height="1" fill="#0000ff"/>
<rect x="656" y="252" width="5" height="5" fill="#0000ff"/>
<rect x="778" y="252" width="5" height="5" fill="#0000ff"/>
<rect x="780" y="197" width="1" height="71" fill="#0000ff"/>
<polyline points="780.50,267.50 780.50,270.69 786.88,273.88 774.12,280.25 786.88,286.62 774.12,293.00 780.50,296.19 780.50,299.38" fill="none" stroke="#000080" stroke-width="1"/>
<rect x="780" y="299" width="1" height="14" fill="#0000ff"/>
<rect x="709" y="312" width="72" height="1" fill="#0000ff"/>
<rect x="658" y="197" width="1" height="20" fill="#000080"/>
<rect x="658" y="203" width="14" height="1" fill="#000080"/>
<rect x="671" y="200" width="1" height="7" fill="#000080"/>
<rect x="661" y="215" width="6" height="1" fill="#000080"/>
<rect x="661" y="217" width="6" height="1" fill="#000080"/>
<rect x="658" y="216" width="4" height="1" fill="#000080"/>
<path d="M666.5 213.5 Q669.5 216.5 666.5 219" fill="none" stroke="#000080"/>
<rect x="671" y="213" width="1" height="7" fill="#000080"/>
<rect x="674" y="203" width="1" height="27" fill="#000080"/>
<rect x="674" y="203" width="4" height="1" fill="#000080"/>
<rect x="671" y="226" width="1" height="7" fill="#000080"/>
<rect x="658" y="229" width="14" height="1" fill="#000080"/>
<rect x="658" y="229" width="1" height="5" fill="#000080"/>
<rect x="735" y="344" width="65" height="1" fill="#0000ff"/>
<rect x="765" y="342" width="5" height="5" fill="#0000ff"/>
<rect x="797" y="342" width="5" height="5" fill="#0000ff"/>
<rect x="799" y="146" width="1" height="256" fill="#0000ff"/>
<polyline points="799.50,401.50 799.50,404.69 805.88,407.88 793.12,414.25 805.88,420.62 793.12,427.00 799.50,430.19 799.50,433.38" fill="none" stroke="#000080" stroke-width="1"/>
<rect x="799" y="433" width="1" height="20" fill="#0000ff"/>
<polyline points="799.50,452.50 799.50,455.69 805.88,458.88 793.12,465.25 805.88,471.62 793.12,478.00 799.50,481.19 799.50,484.38" fill="none" stroke="#000080" stroke-width="1"/>
<rect x="799" y="484" width="1" height="20" fill="#0000ff"/>
<rect x="797" y="444" width="5" height="5" fill="#0000ff"/>
<rect x="797" y="501" width="5" height="5" fill="#0000ff"/>
<rect x="733" y="501" width="5" height="5" fill="#0000ff"/>
<rect x="735" y="344" width="1" height="89" fill="#0000ff"/>
<rect x="735" y="445" width="1" height="59" fill="#0000ff"/>
<rect x="767" y="344" width="1" height="14" fill="#0000ff"/>
<polyline points="767.50,357.50 767.50,360.69 773.88,363.88 761.12,370.25 773.88,376.62 761.12,383.00 767.50,386.19 767.50,389.38" fill="none" stroke="#000080" stroke-width="1"/>
<rect x="767" y="389" width="1" height="45" fill="#0000ff"/>
<rect x="765" y="399" width="5" height="5" fill="#0000ff"/>
<rect x="658" y="401" width="33" height="1" fill="#0000ff"/>
<polyline points="690.50,401.50 693.69,401.50 696.88,395.12 703.25,407.88 709.62,395.12 716.00,407.88 719.19,401.50 722.38,401.50" fill="none" stroke="#000080" stroke-width="1"/>
<rect x="722" y="401" width="46" height="1" fill="#0000ff"/>
<rect x="656" y="399" width="5" height="5" fill="#0000ff"/>
<rect x="747" y="433" width="21" height="1" fill="#0000ff"/>
<rect x="747" y="446" width="53" height="1" fill="#0000ff"/>
<polyline points="747.50,427.50 723.50,439.50 747.50,452.50 747.50,427.50" fill="none" stroke="#000080" stroke-width="1"/>
<rect x="742" y="433" width="4" height="1" fill="#000080"/>
<rect x="742" y="446" width="5" height="1" fill="#000080"/>
<rect x="744" y="444" width="1" height="5" fill="#000080"/>
<rect x="730" y="431" width="5" height="1" fill="#000080"/>
<rect x="732" y="429" width="1" height="5" fill="#000080"/>
<rect x="731" y="448" width="4" height="1" fill="#000080"/>
<rect x="675" y="439" width="49" height="1" fill="#0000ff"/>
<rect x="658" y="410" width="1" height="5" fill="#000080"/>
<rect x="658" y="414" width="14" height="1" fill="#000080"/>
<rect x="671" y="411" width="1" height="7" fill="#000080"/>
<rect x="658" y="427" width="14" height="1" fill="#000080"/>
<rect x="661.5" y="425.5" width="4" height="3" fill="none" stroke="#000080"/>
<rect x="671" y="424" width="1" height="7" fill="#000080"/>
<rect x="674" y="414" width="1" height="26" fill="#000080"/>
<rect x="671" y="436" width="1" height="8" fill="#000080"/>
<rect x="658" y="439" width="14" height="1" fill="#000080"/>
<rect x="658" y="427" width="1" height="13" fill="#000080"/>
<rect x="863" y="146" width="1" height="52" fill="#0000ff"/>
<rect x="863" y="233" width="1" height="178" fill="#0000ff"/>
<rect x="863" y="439" width="1" height="65" fill="#0000ff"/>
<rect x="861" y="144" width="5" height="5" fill="#0000ff"/>
<rect x="861" y="501" width="5" height="5" fill="#0000ff"/>
<rect x="912" y="144" width="5" height="5" fill="#0000ff"/>
<rect x="950" y="144" width="5" height="5" fill="#0000ff"/>
<rect x="1001" y="144" width="5" height="5" fill="#0000ff"/>
<rect x="914" y="146" width="1" height="51" fill="#0000ff"/>
<rect x="914" y="209" width="1" height="117" fill="#0000ff"/>
<rect x="912" y="310" width="5" height="5" fill="#0000ff"/>
<polyline points="907.50,325.50 921.50,325.50 914.50,333.50 907.50,325.50" fill="none" stroke="#000080" stroke-width="1"/>
<rect x="952" y="146" width="1" height="8" fill="#0000ff"/>
<polyline points="952.50,153.50 952.50,156.69 958.88,159.88 946.12,166.25 958.88,172.62 946.12,179.00 952.50,182.19 952.50,185.38" fill="none" stroke="#000080" stroke-width="1"/>
<rect x="952" y="185" width="1" height="32" fill="#0000ff"/>
<polyline points="952.50,216.50 952.50,219.69 958.88,222.88 946.12,229.25 958.88,235.62 946.12,242.00 952.50,245.19 952.50,248.38" fill="none" stroke="#000080" stroke-width="1"/>
<rect x="952" y="248" width="1" height="65" fill="#0000ff"/>
<rect x="950" y="208" width="5" height="5" fill="#0000ff"/>
<rect x="950" y="310" width="5" height="5" fill="#0000ff"/>
<polyline points="927.50,190.50 902.50,203.50 927.50,216.50 927.50,190.50" fill="none" stroke="#000080" stroke-width="1"/>
<rect x="922" y="197" width="4" height="1" fill="#000080"/>
<rect x="922" y="210" width="5" height="1" fill="#000080"/>
<rect x="924" y="208" width="1" height="5" fill="#000080"/>
<rect x="909" y="195" width="5" height="1" fill="#000080"/>
<rect x="911" y="193" width="1" height="5" fill="#000080"/>
<rect x="909" y="211" width="5" height="1" fill="#000080"/>
<rect x="927" y="197" width="58" height="1" fill="#0000ff"/>
<rect x="927" y="210" width="26" height="1" fill="#0000ff"/>
<rect x="882" y="203" width="21" height="1" fill="#0000ff"/>
<rect x="863" y="254" width="8" height="1" fill="#0000ff"/>
<polyline points="870.50,254.50 873.69,254.50 876.88,248.12 883.25,260.88 889.62,248.12 896.00,260.88 899.19,254.50 902.38,254.50" fill="none" stroke="#000080" stroke-width="1"/>
<rect x="902" y="254" width="83" height="1" fill="#0000ff"/>
<rect x="861" y="252" width="5" height="5" fill="#0000ff"/>
<rect x="982" y="252" width="5" height="5" fill="#0000ff"/>
<rect x="984" y="197" width="1" height="71" fill="#0000ff"/>
<polyline points="984.50,267.50 984.50,270.69 990.88,273.88 978.12,280.25 990.88,286.62 978.12,293.00 984.50,296.19 984.50,299.38" fill="none" stroke="#000080" stroke-width="1"/>
<rect x="984" y="299" width="1" height="14" fill="#0000ff"/>
<rect x="914" y="312" width="71" height="1" fill="#0000ff"/>
<rect x="863" y="197" width="1" height="20" fill="#000080"/>
<rect x="863" y="203" width="14" height="1" fill="#000080"/>
<rect x="876" y="200" width="1" height="7" fill="#000080"/>
<rect x="866" y="215" width="6" height="1" fill="#000080"/>
<rect x="866" y="217" width="6" height="1" fill="#000080"/>
<rect x="863" y="216" width="4" height="1" fill="#000080"/>
<path d="M871.5 213.5 Q874.5 216.5 871.5 219" fill="none" stroke="#000080"/>
<rect x="876" y="213" width="1" height="7" fill="#000080"/>
<rect x="879" y="203" width="1" height="27" fill="#000080"/>
<rect x="879" y="203" width="4" height="1" fill="#000080"/>
<rect x="876" y="226" width="1" height="7" fill="#000080"/>
<rect x="863" y="229" width="14" height="1" fill="#000080"/>
<rect x="863" y="229" width="1" height="5" fill="#000080"/>
<rect x="939" y="344" width="65" height="1" fill="#0000ff"/>
<rect x="969" y="342" width="5" height="5" fill="#0000ff"/>
<rect x="1001" y="342" width="5" height="5" fill="#0000ff"/>
<rect x="1003" y="146" width="1" height="256" fill="#0000ff"/>
<polyline points="1003.50,401.50 1003.50,404.69 1009.88,407.88 997.12,414.25 1009.88,420.62 997.12,427.00 1003.50,430.19 1003.50,433.38" fill="none" stroke="#000080" stroke-width="1"/>
<rect x="1003" y="433" width="1" height="20" fill="#0000ff"/>
<polyline points="1003.50,452.50 1003.50,455.69 1009.88,458.88 997.12,465.25 1009.88,471.62 997.12,478.00 1003.50,481.19 1003.50,484.38" fill="none" stroke="#000080" stroke-width="1"/>
<rect x="1003" y="484" width="1" height="20" fill="#0000ff"/>
<rect x="1001" y="444" width="5" height="5" fill="#0000ff"/>
<rect x="1001" y="501" width="5" height="5" fill="#0000ff"/>
<rect x="937" y="501" width="5" height="5" fill="#0000ff"/>
<rect x="939" y="344" width="1" height="89" fill="#0000ff"/>
<rect x="939" y="445" width="1" height="59" fill="#0000ff"/>
<rect x="971" y="344" width="1" height="14" fill="#0000ff"/>
<polyline points="971.50,357.50 971.50,360.69 977.88,363.88 965.12,370.25 977.88,376.62 965.12,383.00 971.50,386.19 971.50,389.38" fill="none" stroke="#000080" stroke-width="1"/>
<rect x="971" y="389" width="1" height="45" fill="#0000ff"/>
<rect x="969" y="399" width="5" height="5" fill="#0000ff"/>
<rect x="863" y="401" width="33" height="1" fill="#0000ff"/>
<polyline points="895.50,401.50 898.69,401.50 901.88,395.12 908.25,407.88 914.62,395.12 921.00,407.88 924.19,401.50 927.38,401.50" fill="none" stroke="#000080" stroke-width="1"/>
<rect x="927" y="401" width="45" height="1" fill="#0000ff"/>
<rect x="861" y="399" width="5" height="5" fill="#0000ff"/>
<rect x="951" y="433" width="21" height="1" fill="#0000ff"/>
<rect x="951" y="446" width="53" height="1" fill="#0000ff"/>
<polyline points="951.50,427.50 927.50,439.50 951.50,452.50 951.50,427.50" fill="none" stroke="#000080" stroke-width="1"/>
<rect x="946" y="433" width="4" height="1" fill="#000080"/>
<rect x="946" y="446" width="5" height="1" fill="#000080"/>
<rect x="948" y="444" width="1" height="5" fill="#000080"/>
<rect x="934" y="431" width="5" height="1" fill="#000080"/>
<rect x="936" y="429" width="1" height="5" fill="#000080"/>
<rect x="935" y="448" width="4" height="1" fill="#000080"/>
<rect x="880" y="439" width="48" height="1" fill="#0000ff"/>
<rect x="863" y="410" width="1" height="5" fill="#000080"/>
<rect x="863" y="414" width="14" height="1" fill="#000080"/>
<rect x="876" y="411" width="1" height="7" fill="#000080"/>
<rect x="863" y="427" width="14" height="1" fill="#000080"/>
<rect x="866.5" y="425.5" width="4" height="3" fill="none" stroke="#000080"/>
<rect x="876" y="424" width="1" height="7" fill="#000080"/>
<rect x="879" y="414" width="1" height="26" fill="#000080"/>
<rect x="876" y="436" width="1" height="8" fill="#000080"/>
<rect x="863" y="439" width="14" height="1" fill="#000080"/>
<rect x="863" y="427" width="1" height="13" fill="#000080"/></svg><svg width="1280" height="1000" style="left:-8px;top:-122px" font-family="Liberation Sans" font-size="9.8" fill="#000" stroke="#000" stroke-width="0.1"><defs><filter id="crisp" x="0" y="0" width="1" height="1"><feComponentTransfer><feFuncA type="discrete" tableValues="0 0 1 1"/></feComponentTransfer></filter></defs><g><text transform="scale(0.95 1)" x="387.79" y="132.7" text-anchor="start">L1</text>
<text transform="scale(0.95 1)" x="384.63" y="154.7" text-anchor="start">10µ</text>
<text transform="scale(0.95 1)" x="428.84" y="130.7" text-anchor="start">R1</text>
<text transform="scale(0.95 1)" x="424.63" y="154.7" text-anchor="start">30m</text>
<text transform="scale(0.95 1)" x="339.37" y="246.7" text-anchor="start">V1</text>
<text transform="scale(0.95 1)" x="339.37" y="277.7" text-anchor="start">SINE(0 16 150 0 0 0)</text>
<text transform="scale(0.95 1)" x="189.89" y="334.7" text-anchor="start">SINE(0 16 150 0 0 240)</text>
<text transform="scale(0.95 1)" x="367.79" y="334.7" text-anchor="start">SINE(0 16 150 0 0 120)</text>
<text transform="scale(0.95 1)" x="280.42" y="365.7" text-anchor="start">V3</text>
<text transform="scale(0.95 1)" x="366.74" y="365.7" text-anchor="start">V2</text>
<text transform="scale(0.95 1)" x="387.79" y="375.7" text-anchor="start">L3</text>
<text transform="scale(0.95 1)" x="384.63" y="396.7" text-anchor="start">10µ</text>
<text transform="scale(0.95 1)" x="428.84" y="371.7" text-anchor="start">R3</text>
<text transform="scale(0.95 1)" x="423.58" y="396.7" text-anchor="start">30m</text>
<text transform="scale(0.95 1)" x="312.00" y="407.7" text-anchor="start">R2</text>
<text transform="scale(0.95 1)" x="310.95" y="422.7" text-anchor="start">30m</text>
<text transform="scale(0.95 1)" x="310.95" y="446.7" text-anchor="start">L2</text>
<text transform="scale(0.95 1)" x="310.95" y="462.7" text-anchor="start">10µ</text>
<text transform="scale(0.95 1)" x="928.84" y="521.7" text-anchor="start">.tran 0 100m 0 10µ</text>
<text transform="scale(0.95 1)" x="1091.37" y="331.7" text-anchor="end">C1</text>
<text transform="scale(0.95 1)" x="1092.42" y="350.7" text-anchor="end">10000µ</text>
<text transform="scale(0.95 1)" x="1132.00" y="331.7" text-anchor="start">R28</text>
<text transform="scale(0.95 1)" x="1130.95" y="345.7" text-anchor="start">1.2</text>
<text transform="scale(0.95 1)" x="562.95" y="163.7" text-anchor="end">R11</text>
<text transform="scale(0.95 1)" x="562.95" y="177.7" text-anchor="end">9K5</text>
<text transform="scale(0.95 1)" x="525.05" y="193.7" text-anchor="end">U7</text>
<text transform="scale(0.95 1)" x="493.05" y="219.7" text-anchor="start">LT1498</text>
<text transform="scale(0.95 1)" x="474.53" y="209.7" text-anchor="end">FDS4885C_P</text>
<text transform="scale(0.95 1)" x="473.47" y="225.7" text-anchor="end">M1</text>
<text transform="scale(0.95 1)" x="562.95" y="227.7" text-anchor="end">R8</text>
<text transform="scale(0.95 1)" x="562.95" y="241.7" text-anchor="end">100K</text>
<text transform="scale(0.95 1)" x="509.26" y="245.7" text-anchor="end">R10</text>
<text transform="scale(0.95 1)" x="509.26" y="269.7" text-anchor="end">10K</text>
<text transform="scale(0.95 1)" x="596.63" y="279.7" text-anchor="end">R9</text>
<text transform="scale(0.95 1)" x="596.63" y="292.7" text-anchor="end">100K</text>
<text transform="scale(0.95 1)" x="584.00" y="367.7" text-anchor="end">R5</text>
<text transform="scale(0.95 1)" x="584.00" y="382.7" text-anchor="end">100K</text>
<text transform="scale(0.95 1)" x="535.58" y="393.7" text-anchor="end">R4</text>
<text transform="scale(0.95 1)" x="536.63" y="416.7" text-anchor="end">10K</text>
<text transform="scale(0.95 1)" x="617.68" y="412.7" text-anchor="end">R7</text>
<text transform="scale(0.95 1)" x="617.68" y="426.7" text-anchor="end">100K</text>
<text transform="scale(0.95 1)" x="617.68" y="463.7" text-anchor="end">R6</text>
<text transform="scale(0.95 1)" x="617.68" y="478.7" text-anchor="end">9K5</text>
<text transform="scale(0.95 1)" x="551.37" y="430.7" text-anchor="end">U2</text>
<text transform="scale(0.95 1)" x="551.37" y="452.7" text-anchor="end">LM324_NS</text>
<text transform="scale(0.95 1)" x="474.53" y="424.7" text-anchor="end">M2</text>
<text transform="scale(0.95 1)" x="474.53" y="439.7" text-anchor="end">IRFZ44N</text>
<text transform="scale(0.95 1)" x="778.74" y="163.7" text-anchor="end">R19</text>
<text transform="scale(0.95 1)" x="778.74" y="177.7" text-anchor="end">9K5</text>
<text transform="scale(0.95 1)" x="739.79" y="193.7" text-anchor="end">U1</text>
<text transform="scale(0.95 1)" x="707.79" y="219.7" text-anchor="start">LT1498</text>
<text transform="scale(0.95 1)" x="689.26" y="209.7" text-anchor="end">FDS4885C_P</text>
<text transform="scale(0.95 1)" x="688.21" y="225.7" text-anchor="end">M4</text>
<text transform="scale(0.95 1)" x="778.74" y="227.7" text-anchor="end">R16</text>
<text transform="scale(0.95 1)" x="778.74" y="241.7" text-anchor="end">100K</text>
<text transform="scale(0.95 1)" x="724.00" y="245.7" text-anchor="end">R18</text>
<text transform="scale(0.95 1)" x="724.00" y="269.7" text-anchor="end">10K</text>
<text transform="scale(0.95 1)" x="812.42" y="279.7" text-anchor="end">R17</text>
<text transform="scale(0.95 1)" x="812.42" y="292.7" text-anchor="end">100K</text>
<text transform="scale(0.95 1)" x="798.74" y="367.7" text-anchor="end">R13</text>
<text transform="scale(0.95 1)" x="798.74" y="382.7" text-anchor="end">100K</text>
<text transform="scale(0.95 1)" x="750.32" y="393.7" text-anchor="end">R12</text>
<text transform="scale(0.95 1)" x="751.37" y="416.7" text-anchor="end">10K</text>
<text transform="scale(0.95 1)" x="833.47" y="412.7" text-anchor="end">R15</text>
<text transform="scale(0.95 1)" x="833.47" y="426.7" text-anchor="end">100K</text>
<text transform="scale(0.95 1)" x="833.47" y="463.7" text-anchor="end">R14</text>
<text transform="scale(0.95 1)" x="833.47" y="478.7" text-anchor="end">9K5</text>
<text transform="scale(0.95 1)" x="766.11" y="430.7" text-anchor="end">U3</text>
<text transform="scale(0.95 1)" x="766.11" y="452.7" text-anchor="end">LM324_NS</text>
<text transform="scale(0.95 1)" x="689.26" y="424.7" text-anchor="end">M3</text>
<text transform="scale(0.95 1)" x="689.26" y="439.7" text-anchor="end">IRFZ44N</text>
<text transform="scale(0.95 1)" x="993.47" y="163.7" text-anchor="end">R27</text>
<text transform="scale(0.95 1)" x="993.47" y="177.7" text-anchor="end">9K5</text>
<text transform="scale(0.95 1)" x="955.58" y="193.7" text-anchor="end">U4</text>
<text transform="scale(0.95 1)" x="923.58" y="219.7" text-anchor="start">LT1498</text>
<text transform="scale(0.95 1)" x="905.05" y="209.7" text-anchor="end">FDS4885C_P</text>
<text transform="scale(0.95 1)" x="904.00" y="225.7" text-anchor="end">M6</text>
<text transform="scale(0.95 1)" x="993.47" y="227.7" text-anchor="end">R24</text>
<text transform="scale(0.95 1)" x="993.47" y="241.7" text-anchor="end">100K</text>
<text transform="scale(0.95 1)" x="939.79" y="245.7" text-anchor="end">R26</text>
<text transform="scale(0.95 1)" x="939.79" y="269.7" text-anchor="end">10K</text>
<text transform="scale(0.95 1)" x="1027.16" y="279.7" text-anchor="end">R25</text>
<text transform="scale(0.95 1)" x="1027.16" y="292.7" text-anchor="end">100K</text>
<text transform="scale(0.95 1)" x="1013.47" y="367.7" text-anchor="end">R21</text>
<text transform="scale(0.95 1)" x="1013.47" y="382.7" text-anchor="end">100K</text>
<text transform="scale(0.95 1)" x="966.11" y="393.7" text-anchor="end">R20</text>
<text transform="scale(0.95 1)" x="967.16" y="416.7" text-anchor="end">10K</text>
<text transform="scale(0.95 1)" x="1048.21" y="412.7" text-anchor="end">R23</text>
<text transform="scale(0.95 1)" x="1048.21" y="426.7" text-anchor="end">100K</text>
<text transform="scale(0.95 1)" x="1048.21" y="463.7" text-anchor="end">R22</text>
<text transform="scale(0.95 1)" x="1048.21" y="478.7" text-anchor="end">9K5</text>
<text transform="scale(0.95 1)" x="980.84" y="430.7" text-anchor="end">U5</text>
<text transform="scale(0.95 1)" x="980.84" y="452.7" text-anchor="end">LM324_NS</text>
<text transform="scale(0.95 1)" x="905.05" y="424.7" text-anchor="end">M5</text>
<text transform="scale(0.95 1)" x="905.05" y="439.7" text-anchor="end">IRFZ44N</text></g></svg></div>
<div class="a" style="left:1256px;top:138px;width:16px;height:4px;background-color:#fff;background-image:linear-gradient(45deg,#c0dcc0 25%,transparent 25%,transparent 75%,#c0dcc0 75%),linear-gradient(45deg,#c0dcc0 25%,transparent 25%,transparent 75%,#c0dcc0 75%);background-size:2px 2px;background-position:0 0,1px 1px"></div>
<div class="a" style="left:1256px;top:122px;width:16px;height:16px;background:#c0dcc0;border-top:1px solid #c0dcc0;border-left:1px solid #c0dcc0;border-right:1px solid #404040;border-bottom:1px solid #404040;box-shadow:inset 1px 1px 0 #fff, inset -1px -1px 0 #808080"><svg width="14" height="14" style="left:0;top:0"><path d="M3 10 H10 L6.5 6.5 Z" fill="#000" stroke="#000" stroke-width="0.6"/></svg></div>
<div class="a" style="left:1256px;top:142px;width:16px;height:372px;background:#c0dcc0;border-top:1px solid #c0dcc0;border-left:1px solid #c0dcc0;border-right:1px solid #404040;border-bottom:1px solid #404040;box-shadow:inset 1px 1px 0 #fff, inset -1px -1px 0 #808080"></div>
<div class="a" style="left:1256px;top:514px;width:16px;height:16px;background:#c0dcc0;border-top:1px solid #c0dcc0;border-left:1px solid #c0dcc0;border-right:1px solid #404040;border-bottom:1px solid #404040;box-shadow:inset 1px 1px 0 #fff, inset -1px -1px 0 #808080"><svg width="14" height="14" style="left:0;top:0"><path d="M3 5 H10 L6.5 8.5 Z" fill="#000" stroke="#000" stroke-width="0.6"/></svg></div>
<div class="a" style="left:8px;top:561px;width:1264px;height:408px;background:#000;overflow:hidden"><svg width="1280" height="1000" style="left:-8px;top:-561px" shape-rendering="crispEdges">
<line x1="148.5" y1="581" x2="148.5" y2="943" stroke="#7878a0" stroke-dasharray="3 3"/>
<line x1="257.5" y1="581" x2="257.5" y2="943" stroke="#7878a0" stroke-dasharray="3 3"/>
<line x1="365.5" y1="581" x2="365.5" y2="943" stroke="#7878a0" stroke-dasharray="3 3"/>
<line x1="473.5" y1="581" x2="473.5" y2="943" stroke="#7878a0" stroke-dasharray="3 3"/>
<line x1="582.5" y1="581" x2="582.5" y2="943" stroke="#7878a0" stroke-dasharray="3 3"/>
<line x1="690.5" y1="581" x2="690.5" y2="943" stroke="#7878a0" stroke-dasharray="3 3"/>
<line x1="799.5" y1="581" x2="799.5" y2="943" stroke="#7878a0" stroke-dasharray="3 3"/>
<line x1="907.5" y1="581" x2="907.5" y2="943" stroke="#7878a0" stroke-dasharray="3 3"/>
<line x1="1015.5" y1="581" x2="1015.5" y2="943" stroke="#7878a0" stroke-dasharray="3 3"/>
<line x1="1124.5" y1="581" x2="1124.5" y2="943" stroke="#7878a0" stroke-dasharray="3 3"/>
<line x1="40" y1="609.5" x2="1232" y2="609.5" stroke="#7878a0" stroke-dasharray="3 3"/>
<line x1="40" y1="640.5" x2="1232" y2="640.5" stroke="#7878a0" stroke-dasharray="3 3"/>
<line x1="40" y1="670.5" x2="1232" y2="670.5" stroke="#7878a0" stroke-dasharray="3 3"/>
<line x1="40" y1="700.5" x2="1232" y2="700.5" stroke="#7878a0" stroke-dasharray="3 3"/>
<line x1="40" y1="731.5" x2="1232" y2="731.5" stroke="#7878a0" stroke-dasharray="3 3"/>
<line x1="40" y1="761.5" x2="1232" y2="761.5" stroke="#7878a0" stroke-dasharray="3 3"/>
<line x1="40" y1="791.5" x2="1232" y2="791.5" stroke="#7878a0" stroke-dasharray="3 3"/>
<line x1="40" y1="822.5" x2="1232" y2="822.5" stroke="#7878a0" stroke-dasharray="3 3"/>
<line x1="40" y1="852.5" x2="1232" y2="852.5" stroke="#7878a0" stroke-dasharray="3 3"/>
<line x1="40" y1="882.5" x2="1232" y2="882.5" stroke="#7878a0" stroke-dasharray="3 3"/>
<line x1="40" y1="913.5" x2="1232" y2="913.5" stroke="#7878a0" stroke-dasharray="3 3"/>
<rect x="40.5" y="579.5" width="1192" height="364" fill="none" stroke="#a0a0a4"/>
<line x1="33" y1="579.5" x2="40" y2="579.5" stroke="#a0a0a4"/><line x1="1232" y1="579.5" x2="1240" y2="579.5" stroke="#a0a0a4"/>
<line x1="33" y1="609.5" x2="40" y2="609.5" stroke="#a0a0a4"/><line x1="1232" y1="609.5" x2="1240" y2="609.5" stroke="#a0a0a4"/>
<line x1="33" y1="640.5" x2="40" y2="640.5" stroke="#a0a0a4"/><line x1="1232" y1="640.5" x2="1240" y2="640.5" stroke="#a0a0a4"/>
<line x1="33" y1="670.5" x2="40" y2="670.5" stroke="#a0a0a4"/><line x1="1232" y1="670.5" x2="1240" y2="670.5" stroke="#a0a0a4"/>
<line x1="33" y1="700.5" x2="40" y2="700.5" stroke="#a0a0a4"/><line x1="1232" y1="700.5" x2="1240" y2="700.5" stroke="#a0a0a4"/>
<line x1="33" y1="731.5" x2="40" y2="731.5" stroke="#a0a0a4"/><line x1="1232" y1="731.5" x2="1240" y2="731.5" stroke="#a0a0a4"/>
<line x1="33" y1="761.5" x2="40" y2="761.5" stroke="#a0a0a4"/><line x1="1232" y1="761.5" x2="1240" y2="761.5" stroke="#a0a0a4"/>
<line x1="33" y1="791.5" x2="40" y2="791.5" stroke="#a0a0a4"/><line x1="1232" y1="791.5" x2="1240" y2="791.5" stroke="#a0a0a4"/>
<line x1="33" y1="822.5" x2="40" y2="822.5" stroke="#a0a0a4"/><line x1="1232" y1="822.5" x2="1240" y2="822.5" stroke="#a0a0a4"/>
<line x1="33" y1="852.5" x2="40" y2="852.5" stroke="#a0a0a4"/><line x1="1232" y1="852.5" x2="1240" y2="852.5" stroke="#a0a0a4"/>
<line x1="33" y1="882.5" x2="40" y2="882.5" stroke="#a0a0a4"/><line x1="1232" y1="882.5" x2="1240" y2="882.5" stroke="#a0a0a4"/>
<line x1="33" y1="913.5" x2="40" y2="913.5" stroke="#a0a0a4"/><line x1="1232" y1="913.5" x2="1240" y2="913.5" stroke="#a0a0a4"/>
<line x1="33" y1="943.5" x2="40" y2="943.5" stroke="#a0a0a4"/><line x1="1232" y1="943.5" x2="1240" y2="943.5" stroke="#a0a0a4"/>
<line x1="40.5" y1="943" x2="40.5" y2="950" stroke="#a0a0a4"/>
<line x1="148.5" y1="943" x2="148.5" y2="950" stroke="#a0a0a4"/>
<line x1="257.5" y1="943" x2="257.5" y2="950" stroke="#a0a0a4"/>
<line x1="365.5" y1="943" x2="365.5" y2="950" stroke="#a0a0a4"/>
<line x1="473.5" y1="943" x2="473.5" y2="950" stroke="#a0a0a4"/>
<line x1="582.5" y1="943" x2="582.5" y2="950" stroke="#a0a0a4"/>
<line x1="690.5" y1="943" x2="690.5" y2="950" stroke="#a0a0a4"/>
<line x1="799.5" y1="943" x2="799.5" y2="950" stroke="#a0a0a4"/>
<line x1="907.5" y1="943" x2="907.5" y2="950" stroke="#a0a0a4"/>
<line x1="1015.5" y1="943" x2="1015.5" y2="950" stroke="#a0a0a4"/>
<line x1="1124.5" y1="943" x2="1124.5" y2="950" stroke="#a0a0a4"/>
<line x1="1232.5" y1="943" x2="1232.5" y2="950" stroke="#a0a0a4"/>
</svg>
<svg width="1280" height="1000" style="left:-8px;top:-561px">
<text x="32" y="584" text-anchor="end" font-size="14" fill="#a0a0a4" stroke="#a0a0a4" stroke-width="0.3" font-family="Liberation Sans">33V</text>
<text x="1271" y="584" text-anchor="end" font-size="14" fill="#a0a0a4" stroke="#a0a0a4" stroke-width="0.3" font-family="Liberation Sans">3A</text>
<text x="32" y="614" text-anchor="end" font-size="14" fill="#a0a0a4" stroke="#a0a0a4" stroke-width="0.3" font-family="Liberation Sans">30V</text>
<text x="1271" y="614" text-anchor="end" font-size="14" fill="#a0a0a4" stroke="#a0a0a4" stroke-width="0.3" font-family="Liberation Sans">0A</text>
<text x="32" y="645" text-anchor="end" font-size="14" fill="#a0a0a4" stroke="#a0a0a4" stroke-width="0.3" font-family="Liberation Sans">27V</text>
<text x="1271" y="645" text-anchor="end" font-size="14" fill="#a0a0a4" stroke="#a0a0a4" stroke-width="0.3" font-family="Liberation Sans">-3A</text>
<text x="32" y="675" text-anchor="end" font-size="14" fill="#a0a0a4" stroke="#a0a0a4" stroke-width="0.3" font-family="Liberation Sans">24V</text>
<text x="1271" y="675" text-anchor="end" font-size="14" fill="#a0a0a4" stroke="#a0a0a4" stroke-width="0.3" font-family="Liberation Sans">-6A</text>
<text x="32" y="705" text-anchor="end" font-size="14" fill="#a0a0a4" stroke="#a0a0a4" stroke-width="0.3" font-family="Liberation Sans">21V</text>
<text x="1271" y="705" text-anchor="end" font-size="14" fill="#a0a0a4" stroke="#a0a0a4" stroke-width="0.3" font-family="Liberation Sans">-9A</text>
<text x="32" y="736" text-anchor="end" font-size="14" fill="#a0a0a4" stroke="#a0a0a4" stroke-width="0.3" font-family="Liberation Sans">18V</text>
<text x="1271" y="736" text-anchor="end" font-size="14" fill="#a0a0a4" stroke="#a0a0a4" stroke-width="0.3" font-family="Liberation Sans">-12A</text>
<text x="32" y="766" text-anchor="end" font-size="14" fill="#a0a0a4" stroke="#a0a0a4" stroke-width="0.3" font-family="Liberation Sans">15V</text>
<text x="1271" y="766" text-anchor="end" font-size="14" fill="#a0a0a4" stroke="#a0a0a4" stroke-width="0.3" font-family="Liberation Sans">-15A</text>
<text x="32" y="796" text-anchor="end" font-size="14" fill="#a0a0a4" stroke="#a0a0a4" stroke-width="0.3" font-family="Liberation Sans">12V</text>
<text x="1271" y="796" text-anchor="end" font-size="14" fill="#a0a0a4" stroke="#a0a0a4" stroke-width="0.3" font-family="Liberation Sans">-18A</text>
<text x="32" y="827" text-anchor="end" font-size="14" fill="#a0a0a4" stroke="#a0a0a4" stroke-width="0.3" font-family="Liberation Sans">9V</text>
<text x="1271" y="827" text-anchor="end" font-size="14" fill="#a0a0a4" stroke="#a0a0a4" stroke-width="0.3" font-family="Liberation Sans">-21A</text>
<text x="32" y="857" text-anchor="end" font-size="14" fill="#a0a0a4" stroke="#a0a0a4" stroke-width="0.3" font-family="Liberation Sans">6V</text>
<text x="1271" y="857" text-anchor="end" font-size="14" fill="#a0a0a4" stroke="#a0a0a4" stroke-width="0.3" font-family="Liberation Sans">-24A</text>
<text x="32" y="887" text-anchor="end" font-size="14" fill="#a0a0a4" stroke="#a0a0a4" stroke-width="0.3" font-family="Liberation Sans">3V</text>
<text x="1271" y="887" text-anchor="end" font-size="14" fill="#a0a0a4" stroke="#a0a0a4" stroke-width="0.3" font-family="Liberation Sans">-27A</text>
<text x="32" y="918" text-anchor="end" font-size="14" fill="#a0a0a4" stroke="#a0a0a4" stroke-width="0.3" font-family="Liberation Sans">0V</text>
<text x="1271" y="918" text-anchor="end" font-size="14" fill="#a0a0a4" stroke="#a0a0a4" stroke-width="0.3" font-family="Liberation Sans">-30A</text>
<text x="32" y="948" text-anchor="end" font-size="14" fill="#a0a0a4" stroke="#a0a0a4" stroke-width="0.3" font-family="Liberation Sans">-3V</text>
<text x="1271" y="948" text-anchor="end" font-size="14" fill="#a0a0a4" stroke="#a0a0a4" stroke-width="0.3" font-family="Liberation Sans">-33A</text>
<text x="40" y="964" text-anchor="middle" font-size="14" fill="#a0a0a4" stroke="#a0a0a4" stroke-width="0.3" font-family="Liberation Sans">36ms</text>
<text x="148" y="964" text-anchor="middle" font-size="14" fill="#a0a0a4" stroke="#a0a0a4" stroke-width="0.3" font-family="Liberation Sans">38ms</text>
<text x="257" y="964" text-anchor="middle" font-size="14" fill="#a0a0a4" stroke="#a0a0a4" stroke-width="0.3" font-family="Liberation Sans">40ms</text>
<text x="365" y="964" text-anchor="middle" font-size="14" fill="#a0a0a4" stroke="#a0a0a4" stroke-width="0.3" font-family="Liberation Sans">42ms</text>
<text x="473" y="964" text-anchor="middle" font-size="14" fill="#a0a0a4" stroke="#a0a0a4" stroke-width="0.3" font-family="Liberation Sans">44ms</text>
<text x="582" y="964" text-anchor="middle" font-size="14" fill="#a0a0a4" stroke="#a0a0a4" stroke-width="0.3" font-family="Liberation Sans">46ms</text>
<text x="690" y="964" text-anchor="middle" font-size="14" fill="#a0a0a4" stroke="#a0a0a4" stroke-width="0.3" font-family="Liberation Sans">48ms</text>
<text x="799" y="964" text-anchor="middle" font-size="14" fill="#a0a0a4" stroke="#a0a0a4" stroke-width="0.3" font-family="Liberation Sans">50ms</text>
<text x="907" y="964" text-anchor="middle" font-size="14" fill="#a0a0a4" stroke="#a0a0a4" stroke-width="0.3" font-family="Liberation Sans">52ms</text>
<text x="1015" y="964" text-anchor="middle" font-size="14" fill="#a0a0a4" stroke="#a0a0a4" stroke-width="0.3" font-family="Liberation Sans">54ms</text>
<text x="1124" y="964" text-anchor="middle" font-size="14" fill="#a0a0a4" stroke="#a0a0a4" stroke-width="0.3" font-family="Liberation Sans">56ms</text>
<text x="1232" y="964" text-anchor="middle" font-size="14" fill="#a0a0a4" stroke="#a0a0a4" stroke-width="0.3" font-family="Liberation Sans">58ms</text>
<text x="189" y="574" text-anchor="middle" font-size="14" font-weight="bold" fill="#00ff00" font-family="Liberation Sans">V(n014)</text>
<text x="487" y="574" text-anchor="middle" font-size="14" font-weight="bold" fill="#ff00ff" font-family="Liberation Sans">V(n004)</text>
<text x="785" y="574" text-anchor="middle" font-size="14" font-weight="bold" fill="#ff0000" font-family="Liberation Sans">Is(M1)</text>
<text x="1083" y="574" text-anchor="middle" font-size="14" font-weight="bold" fill="#10a0c8" font-family="Liberation Sans">Id(M2)</text>
</svg>
<svg width="1280" height="1000" style="left:-8px;top:-561px" shape-rendering="crispEdges">
<path d="M40.0 914.0 L48.0 914.0 L48.0 913.0 L53.0 913.0 L53.0 914.0 L72.0 914.0 L72.0 915.0 L100.0 915.0 L100.0 914.0 L108.0 914.0 L108.0 913.0 L112.5 913.0 L112.6 914.0 L112.6 862.0 L113.2 886.0 L114.1 880.0 L168.6 661.0 L168.6 660.3 L170.6 661.0 L172.6 661.7 L174.6 662.3 L176.6 662.9 L178.6 663.5 L180.6 663.9 L182.6 664.1 L184.6 664.3 L186.6 664.3 L188.6 664.1 L190.6 663.9 L192.6 663.5 L194.6 662.9 L196.6 662.3 L198.6 661.7 L200.6 661.0 L202.6 660.3 L204.6 659.7 L206.6 659.1 L208.6 658.5 L210.6 658.1 L212.6 657.9 L214.6 657.7 L216.6 657.7 L218.6 657.9 L220.6 658.1 L222.6 658.5 L224.6 659.1 L226.6 659.7 L228.6 660.3 L230.6 661.0 L232.6 661.7 L234.6 662.3 L236.6 662.9 L238.6 663.5 L240.6 663.9 L242.6 664.1 L244.6 664.3 L246.6 664.3 L248.6 664.1 L250.6 663.9 L252.6 663.5 L254.6 662.9 L256.6 662.3 L258.6 661.7 L260.6 661.0 L262.6 660.3 L264.6 659.7 L266.6 659.1 L268.6 658.5 L270.6 658.1 L272.6 657.9 L274.6 657.7 L276.6 657.7 L278.6 657.9 L280.6 658.1 L282.6 658.5 L284.6 659.1 L286.6 659.7 L288.6 660.3 L290.6 661.0 L292.2 661.0 L292.2 695.0 L349.0 914.0 L373.0 914.0 L373.0 915.0 L401.0 915.0 L401.0 914.0 L409.0 914.0 L409.0 913.0 L414.0 913.0 L414.0 914.0 L433.0 914.0 L433.0 915.0 L461.0 915.0 L461.0 914.0 L469.0 914.0 L469.0 913.0 L473.5 913.0 L473.6 914.0 L473.6 862.0 L474.2 886.0 L475.1 880.0 L529.6 661.0 L529.6 660.3 L531.6 661.0 L533.6 661.7 L535.6 662.3 L537.6 662.9 L539.6 663.5 L541.6 663.9 L543.6 664.1 L545.6 664.3 L547.6 664.3 L549.6 664.1 L551.6 663.9 L553.6 663.5 L555.6 662.9 L557.6 662.3 L559.6 661.7 L561.6 661.0 L563.6 660.3 L565.6 659.7 L567.6 659.1 L569.6 658.5 L571.6 658.1 L573.6 657.9 L575.6 657.7 L577.6 657.7 L579.6 657.9 L581.6 658.1 L583.6 658.5 L585.6 659.1 L587.6 659.7 L589.6 660.3 L591.6 661.0 L593.6 661.7 L595.6 662.3 L597.6 662.9 L599.6 663.5 L601.6 663.9 L603.6 664.1 L605.6 664.3 L607.6 664.3 L609.6 664.1 L611.6 663.9 L613.6 663.5 L615.6 662.9 L617.6 662.3 L619.6 661.7 L621.6 661.0 L623.6 660.3 L625.6 659.7 L627.6 659.1 L629.6 658.5 L631.6 658.1 L633.6 657.9 L635.6 657.7 L637.6 657.7 L639.6 657.9 L641.6 658.1 L643.6 658.5 L645.6 659.1 L647.6 659.7 L649.6 660.3 L651.6 661.0 L653.6 661.7 L654.4 661.0 L654.4 695.0 L710.0 914.0 L734.0 914.0 L734.0 915.0 L762.0 915.0 L762.0 914.0 L770.0 914.0 L770.0 913.0 L775.0 913.0 L775.0 914.0 L794.0 914.0 L794.0 915.0 L822.0 915.0 L822.0 914.0 L830.0 914.0 L830.0 913.0 L834.5 913.0 L834.5 914.0 L834.5 862.0 L835.1 886.0 L836.0 880.0 L890.5 661.0 L890.5 660.3 L892.5 661.0 L894.5 661.7 L896.5 662.3 L898.5 662.9 L900.5 663.5 L902.5 663.9 L904.5 664.1 L906.5 664.3 L908.5 664.3 L910.5 664.1 L912.5 663.9 L914.5 663.5 L916.5 662.9 L918.5 662.3 L920.5 661.7 L922.5 661.0 L924.5 660.3 L926.5 659.7 L928.5 659.1 L930.5 658.5 L932.5 658.1 L934.5 657.9 L936.5 657.7 L938.5 657.7 L940.5 657.9 L942.5 658.1 L944.5 658.5 L946.5 659.1 L948.5 659.7 L950.5 660.3 L952.5 661.0 L954.5 661.7 L956.5 662.3 L958.5 662.9 L960.5 663.5 L962.5 663.9 L964.5 664.1 L966.5 664.3 L968.5 664.3 L970.5 664.1 L972.5 663.9 L974.5 663.5 L976.5 662.9 L978.5 662.3 L980.5 661.7 L982.5 661.0 L984.5 660.3 L986.5 659.7 L988.5 659.1 L990.5 658.5 L992.5 658.1 L994.5 657.9 L996.5 657.7 L998.5 657.7 L1000.5 657.9 L1002.5 658.1 L1004.5 658.5 L1006.5 659.1 L1008.5 659.7 L1010.5 660.3 L1012.5 661.0 L1014.5 661.7 L1015.7 661.0 L1015.7 695.0 L1070.9 914.0 L1094.9 914.0 L1094.9 915.0 L1122.9 915.0 L1122.9 914.0 L1130.9 914.0 L1130.9 913.0 L1135.9 913.0 L1135.9 914.0 L1154.9 914.0 L1154.9 915.0 L1182.9 915.0 L1182.9 914.0 L1190.9 914.0 L1190.9 913.0 L1195.4 913.0 L1196.3 914.0 L1196.3 862.0 L1196.9 886.0 L1197.8 880.0 L1232.0 742.6" stroke="#00ff00" fill="none" stroke-width="1"/>
<path d="M40.0 662.5 L42.0 662.6 L44.0 662.7 L46.0 662.9 L48.0 663.1 L50.0 663.5 L52.0 663.9 L54.0 664.4 L56.0 665.0 L58.0 665.5 L60.0 666.1 L62.0 666.6 L64.0 667.0 L66.0 667.3 L68.0 667.5 L70.0 667.5 L72.0 667.3 L74.0 667.0 L76.0 666.6 L78.0 666.1 L80.0 665.5 L82.0 665.0 L84.0 664.4 L86.0 663.9 L88.0 663.5 L90.0 663.1 L92.0 662.9 L94.0 662.7 L96.0 662.6 L98.0 662.5 L100.0 662.5 L102.0 662.6 L104.0 662.7 L106.0 662.9 L108.0 663.1 L110.0 663.5 L112.0 663.9 L114.0 664.4 L116.0 664.9 L118.0 665.5 L120.0 666.0 L122.0 666.6 L124.0 667.0 L126.0 667.3 L128.0 667.5 L130.0 667.5 L132.0 667.3 L134.0 667.0 L136.0 666.6 L138.0 666.1 L140.0 665.6 L142.0 665.0 L144.0 664.4 L146.0 664.0 L148.0 663.5 L150.0 663.2 L152.0 662.9 L154.0 662.7 L156.0 662.6 L158.0 662.5 L160.0 662.5 L162.0 662.6 L164.0 662.7 L166.0 662.8 L168.0 663.1 L170.0 663.4 L172.0 663.8 L174.0 664.3 L176.0 664.9 L178.0 665.4 L180.0 666.0 L182.0 666.5 L184.0 667.0 L186.0 667.3 L188.0 667.5 L190.0 667.5 L192.0 667.4 L194.0 667.1 L196.0 666.7 L198.0 666.2 L200.0 665.6 L202.0 665.0 L204.0 664.5 L206.0 664.0 L208.0 663.6 L210.0 663.2 L212.0 662.9 L214.0 662.7 L216.0 662.6 L218.0 662.5 L220.0 662.5 L222.0 662.5 L224.0 662.7 L226.0 662.8 L228.0 663.1 L230.0 663.4 L232.0 663.8 L234.0 664.3 L236.0 664.8 L238.0 665.4 L240.0 666.0 L242.0 666.5 L244.0 666.9 L246.0 667.3 L248.0 667.5 L250.0 667.5 L252.0 667.4 L254.0 667.1 L256.0 666.7 L258.0 666.2 L260.0 665.7 L262.0 665.1 L264.0 664.5 L266.0 664.0 L268.0 663.6 L270.0 663.2 L272.0 662.9 L274.0 662.7 L276.0 662.6 L278.0 662.5 L280.0 662.5 L282.0 662.5 L284.0 662.6 L286.0 662.8 L288.0 663.1 L290.0 663.4 L292.0 663.8 L294.0 664.3 L296.0 664.8 L298.0 665.4 L300.0 665.9 L302.0 666.4 L304.0 666.9 L306.0 667.2 L308.0 667.4 L310.0 667.5 L312.0 667.4 L314.0 667.1 L316.0 666.7 L318.0 666.2 L320.0 665.7 L322.0 665.1 L324.0 664.6 L326.0 664.1 L328.0 663.6 L330.0 663.2 L332.0 663.0 L334.0 662.7 L336.0 662.6 L338.0 662.5 L340.0 662.5 L342.0 662.5 L344.0 662.6 L346.0 662.8 L348.0 663.0 L350.0 663.4 L352.0 663.7 L354.0 664.2 L356.0 664.7 L358.0 665.3 L360.0 665.9 L362.0 666.4 L364.0 666.9 L366.0 667.2 L368.0 667.4 L370.0 667.5 L372.0 667.4 L374.0 667.1 L376.0 666.8 L378.0 666.3 L380.0 665.7 L382.0 665.2 L384.0 664.6 L386.0 664.1 L388.0 663.6 L390.0 663.3 L392.0 663.0 L394.0 662.8 L396.0 662.6 L398.0 662.5 L400.0 662.5 L402.0 662.5 L404.0 662.6 L406.0 662.8 L408.0 663.0 L410.0 663.3 L412.0 663.7 L414.0 664.2 L416.0 664.7 L418.0 665.3 L420.0 665.8 L422.0 666.4 L424.0 666.8 L426.0 667.2 L428.0 667.4 L430.0 667.5 L432.0 667.4 L434.0 667.2 L436.0 666.8 L438.0 666.3 L440.0 665.8 L442.0 665.2 L444.0 664.7 L446.0 664.1 L448.0 663.7 L450.0 663.3 L452.0 663.0 L454.0 662.8 L456.0 662.6 L458.0 662.5 L460.0 662.5 L462.0 662.5 L464.0 662.6 L466.0 662.8 L468.0 663.0 L470.0 663.3 L472.0 663.7 L474.0 664.1 L476.0 664.7 L478.0 665.2 L480.0 665.8 L482.0 666.3 L484.0 666.8 L486.0 667.2 L488.0 667.4 L490.0 667.5 L492.0 667.4 L494.0 667.2 L496.0 666.8 L498.0 666.4 L500.0 665.8 L502.0 665.3 L504.0 664.7 L506.0 664.2 L508.0 663.7 L510.0 663.3 L512.0 663.0 L514.0 662.8 L516.0 662.6 L518.0 662.5 L520.0 662.5 L522.0 662.5 L524.0 662.6 L526.0 662.8 L528.0 663.0 L530.0 663.3 L532.0 663.7 L534.0 664.1 L536.0 664.6 L538.0 665.2 L540.0 665.8 L542.0 666.3 L544.0 666.8 L546.0 667.2 L548.0 667.4 L550.0 667.5 L552.0 667.4 L554.0 667.2 L556.0 666.9 L558.0 666.4 L560.0 665.9 L562.0 665.3 L564.0 664.7 L566.0 664.2 L568.0 663.7 L570.0 663.3 L572.0 663.0 L574.0 662.8 L576.0 662.6 L578.0 662.5 L580.0 662.5 L582.0 662.5 L584.0 662.6 L586.0 662.7 L588.0 663.0 L590.0 663.2 L592.0 663.6 L594.0 664.1 L596.0 664.6 L598.0 665.1 L600.0 665.7 L602.0 666.3 L604.0 666.7 L606.0 667.1 L608.0 667.4 L610.0 667.5 L612.0 667.4 L614.0 667.2 L616.0 666.9 L618.0 666.4 L620.0 665.9 L622.0 665.3 L624.0 664.8 L626.0 664.2 L628.0 663.8 L630.0 663.4 L632.0 663.1 L634.0 662.8 L636.0 662.6 L638.0 662.5 L640.0 662.5 L642.0 662.5 L644.0 662.6 L646.0 662.7 L648.0 662.9 L650.0 663.2 L652.0 663.6 L654.0 664.0 L656.0 664.5 L658.0 665.1 L660.0 665.7 L662.0 666.2 L664.0 666.7 L666.0 667.1 L668.0 667.4 L670.0 667.5 L672.0 667.5 L674.0 667.3 L676.0 666.9 L678.0 666.5 L680.0 665.9 L682.0 665.4 L684.0 664.8 L686.0 664.3 L688.0 663.8 L690.0 663.4 L692.0 663.1 L694.0 662.8 L696.0 662.7 L698.0 662.5 L700.0 662.5 L702.0 662.5 L704.0 662.6 L706.0 662.7 L708.0 662.9 L710.0 663.2 L712.0 663.6 L714.0 664.0 L716.0 664.5 L718.0 665.1 L720.0 665.6 L722.0 666.2 L724.0 666.7 L726.0 667.1 L728.0 667.4 L730.0 667.5 L732.0 667.5 L734.0 667.3 L736.0 667.0 L738.0 666.5 L740.0 666.0 L742.0 665.4 L744.0 664.9 L746.0 664.3 L748.0 663.8 L750.0 663.4 L752.0 663.1 L754.0 662.8 L756.0 662.7 L758.0 662.6 L760.0 662.5 L762.0 662.5 L764.0 662.6 L766.0 662.7 L768.0 662.9 L770.0 663.2 L772.0 663.5 L774.0 664.0 L776.0 664.5 L778.0 665.0 L780.0 665.6 L782.0 666.1 L784.0 666.6 L786.0 667.1 L788.0 667.3 L790.0 667.5 L792.0 667.5 L794.0 667.3 L796.0 667.0 L798.0 666.5 L800.0 666.0 L802.0 665.5 L804.0 664.9 L806.0 664.4 L808.0 663.9 L810.0 663.5 L812.0 663.1 L814.0 662.9 L816.0 662.7 L818.0 662.6 L820.0 662.5 L822.0 662.5 L824.0 662.6 L826.0 662.7 L828.0 662.9 L830.0 663.2 L832.0 663.5 L834.0 663.9 L836.0 664.4 L838.0 665.0 L840.0 665.5 L842.0 666.1 L844.0 666.6 L846.0 667.0 L848.0 667.3 L850.0 667.5 L852.0 667.5 L854.0 667.3 L856.0 667.0 L858.0 666.6 L860.0 666.1 L862.0 665.5 L864.0 664.9 L866.0 664.4 L868.0 663.9 L870.0 663.5 L872.0 663.1 L874.0 662.9 L876.0 662.7 L878.0 662.6 L880.0 662.5 L882.0 662.5 L884.0 662.6 L886.0 662.7 L888.0 662.9 L890.0 663.1 L892.0 663.5 L894.0 663.9 L896.0 664.4 L898.0 664.9 L900.0 665.5 L902.0 666.1 L904.0 666.6 L906.0 667.0 L908.0 667.3 L910.0 667.5 L912.0 667.5 L914.0 667.3 L916.0 667.0 L918.0 666.6 L920.0 666.1 L922.0 665.6 L924.0 665.0 L926.0 664.4 L928.0 663.9 L930.0 663.5 L932.0 663.2 L934.0 662.9 L936.0 662.7 L938.0 662.6 L940.0 662.5 L942.0 662.5 L944.0 662.6 L946.0 662.7 L948.0 662.9 L950.0 663.1 L952.0 663.4 L954.0 663.9 L956.0 664.3 L958.0 664.9 L960.0 665.5 L962.0 666.0 L964.0 666.5 L966.0 667.0 L968.0 667.3 L970.0 667.5 L972.0 667.5 L974.0 667.3 L976.0 667.1 L978.0 666.7 L980.0 666.2 L982.0 665.6 L984.0 665.0 L986.0 664.5 L988.0 664.0 L990.0 663.5 L992.0 663.2 L994.0 662.9 L996.0 662.7 L998.0 662.6 L1000.0 662.5 L1002.0 662.5 L1004.0 662.6 L1006.0 662.7 L1008.0 662.8 L1010.0 663.1 L1012.0 663.4 L1014.0 663.8 L1016.0 664.3 L1018.0 664.8 L1020.0 665.4 L1022.0 666.0 L1024.0 666.5 L1026.0 666.9 L1028.0 667.3 L1030.0 667.5 L1032.0 667.5 L1034.0 667.4 L1036.0 667.1 L1038.0 666.7 L1040.0 666.2 L1042.0 665.6 L1044.0 665.1 L1046.0 664.5 L1048.0 664.0 L1050.0 663.6 L1052.0 663.2 L1054.0 662.9 L1056.0 662.7 L1058.0 662.6 L1060.0 662.5 L1062.0 662.5 L1064.0 662.5 L1066.0 662.6 L1068.0 662.8 L1070.0 663.1 L1072.0 663.4 L1074.0 663.8 L1076.0 664.3 L1078.0 664.8 L1080.0 665.4 L1082.0 665.9 L1084.0 666.5 L1086.0 666.9 L1088.0 667.3 L1090.0 667.5 L1092.0 667.5 L1094.0 667.4 L1096.0 667.1 L1098.0 666.7 L1100.0 666.2 L1102.0 665.7 L1104.0 665.1 L1106.0 664.6 L1108.0 664.0 L1110.0 663.6 L1112.0 663.2 L1114.0 662.9 L1116.0 662.7 L1118.0 662.6 L1120.0 662.5 L1122.0 662.5 L1124.0 662.5 L1126.0 662.6 L1128.0 662.8 L1130.0 663.0 L1132.0 663.4 L1134.0 663.8 L1136.0 664.2 L1138.0 664.8 L1140.0 665.3 L1142.0 665.9 L1144.0 666.4 L1146.0 666.9 L1148.0 667.2 L1150.0 667.4 L1152.0 667.5 L1154.0 667.4 L1156.0 667.1 L1158.0 666.8 L1160.0 666.3 L1162.0 665.7 L1164.0 665.2 L1166.0 664.6 L1168.0 664.1 L1170.0 663.6 L1172.0 663.3 L1174.0 663.0 L1176.0 662.7 L1178.0 662.6 L1180.0 662.5 L1182.0 662.5 L1184.0 662.5 L1186.0 662.6 L1188.0 662.8 L1190.0 663.0 L1192.0 663.3 L1194.0 663.7 L1196.0 664.2 L1198.0 664.7 L1200.0 665.3 L1202.0 665.8 L1204.0 666.4 L1206.0 666.9 L1208.0 667.2 L1210.0 667.4 L1212.0 667.5 L1214.0 667.4 L1216.0 667.2 L1218.0 666.8 L1220.0 666.3 L1222.0 665.8 L1224.0 665.2 L1226.0 664.6 L1228.0 664.1 L1230.0 663.7 L1232.0 663.3" stroke="#ff00ff" fill="none" stroke-width="1"/>
<path d="M40.0 609.0 L168.0 609.0 L168.0 609.0 L179.5 700.0 L182.5 730.0 L185.0 761.0 L187.5 791.0 L190.0 822.0 L192.0 852.0 L195.0 882.0 L198.8 912.0 L200.8 922.0 L202.8 928.7 L204.2 931.6 L205.8 932.5 L207.2 931.6 L208.8 928.7 L210.8 922.0 L212.8 912.0 L216.2 882.0 L218.8 852.0 L221.2 822.0 L223.8 791.0 L225.0 761.0 L227.0 730.0 L229.5 700.0 L231.5 658.0 L232.4 645.5 L234.0 649.0 L235.5 657.0 L236.6 664.0 L237.6 677.0 L239.1 690.0 L240.6 700.0 L242.6 730.0 L245.2 761.0 L247.7 791.0 L250.2 822.0 L252.3 852.0 L255.8 882.0 L259.3 912.0 L261.4 921.6 L263.4 927.9 L264.9 930.6 L266.4 931.5 L268.0 930.6 L269.5 927.9 L271.5 921.6 L273.5 912.0 L276.8 882.0 L280.1 852.0 L281.9 822.0 L284.4 791.0 L285.7 761.0 L287.7 730.0 L290.2 700.0 L292.8 609.0 L529.3 609.0 L529.3 609.0 L540.8 700.0 L543.8 730.0 L546.3 761.0 L548.8 791.0 L551.3 822.0 L553.3 852.0 L556.3 882.0 L560.0 912.0 L562.0 922.0 L564.0 928.7 L565.5 931.6 L567.0 932.5 L568.5 931.6 L570.0 928.7 L572.0 922.0 L574.0 912.0 L577.5 882.0 L580.0 852.0 L582.5 822.0 L585.0 791.0 L586.3 761.0 L588.3 730.0 L590.8 700.0 L592.8 658.0 L593.7 645.5 L595.3 649.0 L596.8 657.0 L597.9 664.0 L598.9 677.0 L600.4 690.0 L601.9 700.0 L603.9 730.0 L606.5 761.0 L609.0 791.0 L611.5 822.0 L613.6 852.0 L617.1 882.0 L620.6 912.0 L622.7 921.6 L624.7 927.9 L626.2 930.6 L627.7 931.5 L629.3 930.6 L630.8 927.9 L632.8 921.6 L634.8 912.0 L638.1 882.0 L641.4 852.0 L643.2 822.0 L645.7 791.0 L647.0 761.0 L649.0 730.0 L651.5 700.0 L654.1 609.0 L890.6 609.0 L890.6 609.0 L902.1 700.0 L905.1 730.0 L907.6 761.0 L910.1 791.0 L912.6 822.0 L914.6 852.0 L917.6 882.0 L921.4 912.0 L923.4 922.0 L925.4 928.7 L926.9 931.6 L928.4 932.5 L929.9 931.6 L931.4 928.7 L933.4 922.0 L935.4 912.0 L938.9 882.0 L941.4 852.0 L943.9 822.0 L946.4 791.0 L947.6 761.0 L949.6 730.0 L952.1 700.0 L954.1 658.0 L955.0 645.5 L956.6 649.0 L958.1 657.0 L959.2 664.0 L960.2 677.0 L961.7 690.0 L963.2 700.0 L965.2 730.0 L967.8 761.0 L970.3 791.0 L972.8 822.0 L974.9 852.0 L978.4 882.0 L981.9 912.0 L984.0 921.6 L986.0 927.9 L987.5 930.6 L989.0 931.5 L990.6 930.6 L992.1 927.9 L994.1 921.6 L996.1 912.0 L999.4 882.0 L1002.7 852.0 L1004.5 822.0 L1007.0 791.0 L1008.3 761.0 L1010.3 730.0 L1012.8 700.0 L1015.4 609.0 L1232.0 609.0" stroke="#ff0000" fill="none" stroke-width="1"/>
<path d="M40.0 843.6 L41.8 822.0 L44.3 791.0 L45.6 761.0 L47.6 730.0 L50.1 700.0 L52.1 659.9 L53.0 648.0 L54.6 651.3 L56.1 659.0 L57.1 665.7 L58.1 678.1 L59.6 690.5 L61.1 700.0 L63.1 730.0 L65.6 761.0 L68.1 791.0 L70.6 822.0 L72.6 852.0 L76.1 882.0 L79.6 912.0 L81.6 921.6 L83.6 927.9 L85.1 930.6 L86.6 931.5 L88.1 930.6 L89.6 927.9 L91.6 921.6 L93.6 912.0 L96.8 882.0 L100.1 852.0 L101.8 822.0 L104.3 791.0 L105.6 761.0 L107.6 730.0 L110.1 700.0 L112.6 609.0 L349.5 609.0 L349.5 609.0 L361.0 700.0 L364.0 730.0 L366.5 761.0 L369.0 791.0 L371.5 822.0 L373.5 852.0 L376.5 882.0 L380.2 912.0 L382.2 922.0 L384.2 928.7 L385.8 931.6 L387.2 932.5 L388.8 931.6 L390.2 928.7 L392.2 922.0 L394.2 912.0 L397.8 882.0 L400.2 852.0 L402.8 822.0 L405.2 791.0 L406.5 761.0 L408.5 730.0 L411.0 700.0 L413.0 659.9 L413.9 648.0 L415.5 651.3 L417.0 659.0 L418.0 665.7 L419.0 678.1 L420.5 690.5 L422.0 700.0 L424.0 730.0 L426.5 761.0 L429.0 791.0 L431.5 822.0 L433.5 852.0 L437.0 882.0 L440.5 912.0 L442.5 921.6 L444.5 927.9 L446.0 930.6 L447.5 931.5 L449.0 930.6 L450.5 927.9 L452.5 921.6 L454.5 912.0 L457.8 882.0 L461.0 852.0 L462.8 822.0 L465.2 791.0 L466.5 761.0 L468.5 730.0 L471.0 700.0 L473.5 609.0 L710.5 609.0 L710.5 609.0 L722.0 700.0 L725.0 730.0 L727.5 761.0 L730.0 791.0 L732.5 822.0 L734.5 852.0 L737.5 882.0 L741.2 912.0 L743.2 922.0 L745.2 928.7 L746.7 931.6 L748.2 932.5 L749.7 931.6 L751.2 928.7 L753.2 922.0 L755.2 912.0 L758.7 882.0 L761.2 852.0 L763.7 822.0 L766.2 791.0 L767.5 761.0 L769.5 730.0 L772.0 700.0 L774.0 659.9 L774.9 648.0 L776.5 651.3 L778.0 659.0 L779.0 665.7 L780.0 678.1 L781.5 690.5 L783.0 700.0 L785.0 730.0 L787.5 761.0 L790.0 791.0 L792.5 822.0 L794.5 852.0 L798.0 882.0 L801.5 912.0 L803.5 921.6 L805.5 927.9 L807.0 930.6 L808.5 931.5 L810.0 930.6 L811.5 927.9 L813.5 921.6 L815.5 912.0 L818.7 882.0 L822.0 852.0 L823.7 822.0 L826.2 791.0 L827.5 761.0 L829.5 730.0 L832.0 700.0 L834.5 609.0 L1071.4 609.0 L1071.4 609.0 L1082.9 700.0 L1085.9 730.0 L1088.4 761.0 L1090.9 791.0 L1093.4 822.0 L1095.4 852.0 L1098.4 882.0 L1102.2 912.0 L1104.2 922.0 L1106.2 928.7 L1107.7 931.6 L1109.2 932.5 L1110.7 931.6 L1112.2 928.7 L1114.2 922.0 L1116.2 912.0 L1119.7 882.0 L1122.2 852.0 L1124.7 822.0 L1127.2 791.0 L1128.4 761.0 L1130.4 730.0 L1132.9 700.0 L1134.9 659.9 L1135.8 648.0 L1137.4 651.3 L1138.9 659.0 L1139.9 665.7 L1140.9 678.1 L1142.4 690.5 L1143.9 700.0 L1145.9 730.0 L1148.4 761.0 L1150.9 791.0 L1153.4 822.0 L1155.4 852.0 L1158.9 882.0 L1162.4 912.0 L1164.4 921.6 L1166.4 927.9 L1167.9 930.6 L1169.4 931.5 L1170.9 930.6 L1172.4 927.9 L1174.4 921.6 L1176.4 912.0 L1179.7 882.0 L1182.9 852.0 L1184.7 822.0 L1187.2 791.0 L1188.4 761.0 L1190.4 730.0 L1192.9 700.0 L1195.4 609.0 L1232.0 609.0" stroke="#10a0c8" fill="none" stroke-width="1"/>
</svg></div>
<div class="a" style="left:0px;top:976px;width:1280px;height:1px;background:#fff"></div>
<div class="a" style="left:1229px;top:980px;width:51px;height:1px;background:#808080"></div><div class="a" style="left:1229px;top:980px;width:1px;height:15px;background:#808080"></div><div class="a" style="left:1229px;top:995px;width:51px;height:1px;background:#fff"></div>
<div class="a" style="left:0px;top:997px;width:1280px;height:1px;background:#fff"></div>
</body></html>
